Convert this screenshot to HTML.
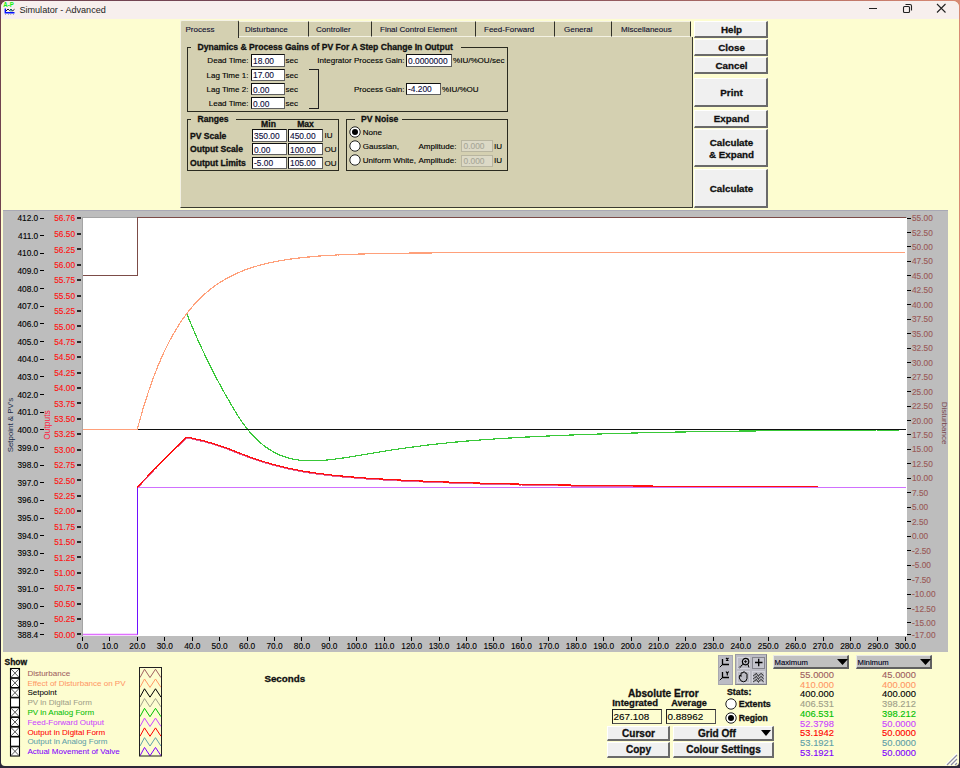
<!DOCTYPE html>
<html><head><meta charset="utf-8"><style>
html,body{margin:0;padding:0;width:960px;height:768px;overflow:hidden;}
body{position:relative;font-family:"Liberation Sans", sans-serif;}
.b{position:absolute;}
.t{position:absolute;white-space:nowrap;line-height:1;font-family:"Liberation Sans", sans-serif;}
.k{-webkit-text-stroke-width:0.3px;}
.n{-webkit-text-stroke-width:0.12px;}
</style></head><body>
<div class="b" style="left:0;top:0;width:960px;height:768px;background:linear-gradient(90deg,#70424f 0%,#7a4a58 50%,#c47a6a 90%,#d88a74 100%)"></div>
<div class="b" style="left:0;top:300px;width:960px;height:468px;background:linear-gradient(180deg,rgba(44,38,56,0) 0%,#2c2638 50%)"></div>
<div class="b" style="left:1px;top:1px;width:958px;height:765px;background:#fdfdd0;border-radius:6px 6px 4px 4px;overflow:hidden"></div>
<div class="b" style="left:1px;top:1px;width:958px;height:18px;background:#f7efed;border-radius:6px 6px 0 0"></div>
<div class="t n" style="left:19.40px;top:5.50px;font-size:9.1px;color:#1c1c1c;font-weight:normal;-webkit-text-stroke-width:0;">Simulator - Advanced</div>
<svg class="b" style="left:3px;top:1px" width="13" height="15" viewBox="0 0 13 15">
<text x="0.3" y="5.8" font-family="Liberation Sans" font-weight="bold" font-size="6.6" fill="#10f010" textLength="10.5" lengthAdjust="spacingAndGlyphs">A-P</text>
<polyline points="2.3,7.5 2.3,11.8 11.5,11.8" fill="none" stroke="#0010ff" stroke-width="1.4"/>
<polyline points="3,10 5,8 6.5,9.5 8,8 9.5,10 11.5,8.3" fill="none" stroke="#202020" stroke-width="1"/>
<path d="M8 8 V10.5" stroke="#108080" stroke-width="1.2"/>
<path d="M2 13.5 H2.6 M5 13.5 H5.6 M7.5 13.5 H8.1 M10 13.5 H10.6" stroke="#707070" stroke-width="0.8"/>
</svg>
<div class="b" style="left:869px;top:8px;width:8px;height:1px;background:#222"></div>
<svg class="b" style="left:900px;top:2px" width="14" height="12" viewBox="0 0 14 12">
<rect x="3.5" y="4.5" width="6" height="6" rx="1" fill="none" stroke="#222" stroke-width="1.1"/>
<path d="M5.5 2.5 H10 a1.5 1.5 0 0 1 1.5 1.5 V8.5" fill="none" stroke="#222" stroke-width="1.1"/>
</svg>
<svg class="b" style="left:935px;top:2.3px" width="12" height="12" viewBox="0 0 12 12">
<path d="M2 2 L10.5 10.5 M10.5 2 L2 10.5" stroke="#222" stroke-width="1.1"/>
</svg>
<div class="b" style="left:180px;top:37px;width:513px;height:171px;background:#d4d0b1;border-left:1px solid #f4f2e4;border-right:1px solid #3a3a30;border-bottom:1px solid #3a3a30;box-sizing:border-box"></div>
<div class="b" style="left:180px;top:20px;width:59px;height:18px;background:#d4d0b1;border-left:1px solid #f4f2e4;border-top:1px solid #f4f2e4;border-right:1.5px solid #303028;border-radius:2px 2px 0 0;box-sizing:border-box"></div>
<div class="t n" style="left:185.50px;top:26.23px;font-size:8.0px;color:#101030;font-weight:normal;">Process</div>
<div class="b" style="left:239px;top:21px;width:70px;height:16px;background:#d4d0b1;border-top:1px solid #f4f2e4;border-right:1.5px solid #303028;border-bottom:1px solid #f4f2e4;box-sizing:border-box"></div>
<div class="t n" style="left:245.00px;top:25.73px;font-size:8.0px;color:#101030;font-weight:normal;">Disturbance</div>
<div class="b" style="left:309px;top:21px;width:63px;height:16px;background:#d4d0b1;border-top:1px solid #f4f2e4;border-right:1.5px solid #303028;border-bottom:1px solid #f4f2e4;box-sizing:border-box"></div>
<div class="t n" style="left:316.00px;top:25.73px;font-size:8.0px;color:#101030;font-weight:normal;">Controller</div>
<div class="b" style="left:372px;top:21px;width:104px;height:16px;background:#d4d0b1;border-top:1px solid #f4f2e4;border-right:1.5px solid #303028;border-bottom:1px solid #f4f2e4;box-sizing:border-box"></div>
<div class="t n" style="left:380.00px;top:25.73px;font-size:8.0px;color:#101030;font-weight:normal;">Final Control Element</div>
<div class="b" style="left:476px;top:21px;width:79px;height:16px;background:#d4d0b1;border-top:1px solid #f4f2e4;border-right:1.5px solid #303028;border-bottom:1px solid #f4f2e4;box-sizing:border-box"></div>
<div class="t n" style="left:484.00px;top:25.73px;font-size:8.0px;color:#101030;font-weight:normal;">Feed-Forward</div>
<div class="b" style="left:555px;top:21px;width:57px;height:16px;background:#d4d0b1;border-top:1px solid #f4f2e4;border-right:1.5px solid #303028;border-bottom:1px solid #f4f2e4;box-sizing:border-box"></div>
<div class="t n" style="left:564.00px;top:25.73px;font-size:8.0px;color:#101030;font-weight:normal;">General</div>
<div class="b" style="left:612px;top:21px;width:79px;height:16px;background:#d4d0b1;border-top:1px solid #f4f2e4;border-right:1.5px solid #303028;border-bottom:1px solid #f4f2e4;box-sizing:border-box"></div>
<div class="t n" style="left:621.00px;top:25.73px;font-size:8.0px;color:#101030;font-weight:normal;">Miscellaneous</div>
<div class="b" style="left:187px;top:47px;width:321px;height:65px;border:1px solid #2a2a20;box-sizing:border-box"></div>
<div class="b" style="left:191.0px;top:44px;width:269.5px;height:6px;background:#d4d0b1"></div>
<div class="t k" style="left:197.50px;top:42.72px;font-size:8.6px;color:#101010;font-weight:bold;">Dynamics &amp; Process Gains of PV For A Step Change In Output</div>
<div class="b" style="left:251px;top:54px;width:33.5px;height:12.5px;background:#fff;border:1px solid #101010;border-right-color:#606060;border-bottom-color:#606060;box-sizing:border-box"></div>
<div class="t n" style="left:253.00px;top:56.89px;font-size:8.4px;color:#101040;font-weight:normal;">18.00</div>
<div class="t n" style="right:711.50px;text-align:right;top:57.19px;font-size:8.05px;color:#000;font-weight:normal;">Dead Time:</div>
<div class="t n" style="left:285.50px;top:57.19px;font-size:8.05px;color:#000;font-weight:normal;">sec</div>
<div class="b" style="left:251px;top:68.5px;width:33.5px;height:12.5px;background:#fff;border:1px solid #101010;border-right-color:#606060;border-bottom-color:#606060;box-sizing:border-box"></div>
<div class="t n" style="left:253.00px;top:71.39px;font-size:8.4px;color:#101040;font-weight:normal;">17.00</div>
<div class="t n" style="right:711.50px;text-align:right;top:71.69px;font-size:8.05px;color:#000;font-weight:normal;">Lag Time 1:</div>
<div class="t n" style="left:285.50px;top:71.69px;font-size:8.05px;color:#000;font-weight:normal;">sec</div>
<div class="b" style="left:251px;top:82.7px;width:33.5px;height:12.5px;background:#fff;border:1px solid #101010;border-right-color:#606060;border-bottom-color:#606060;box-sizing:border-box"></div>
<div class="t n" style="left:253.00px;top:85.59px;font-size:8.4px;color:#101040;font-weight:normal;">0.00</div>
<div class="t n" style="right:711.50px;text-align:right;top:85.89px;font-size:8.05px;color:#000;font-weight:normal;">Lag Time 2:</div>
<div class="t n" style="left:285.50px;top:85.89px;font-size:8.05px;color:#000;font-weight:normal;">sec</div>
<div class="b" style="left:251px;top:96.8px;width:33.5px;height:12.5px;background:#fff;border:1px solid #101010;border-right-color:#606060;border-bottom-color:#606060;box-sizing:border-box"></div>
<div class="t n" style="left:253.00px;top:99.69px;font-size:8.4px;color:#101040;font-weight:normal;">0.00</div>
<div class="t n" style="right:711.50px;text-align:right;top:99.99px;font-size:8.05px;color:#000;font-weight:normal;">Lead Time:</div>
<div class="t n" style="left:285.50px;top:99.99px;font-size:8.05px;color:#000;font-weight:normal;">sec</div>
<div class="b" style="left:309px;top:69px;width:10px;height:40px;border-top:1px solid #202020;border-right:1px solid #202020;border-bottom:1px solid #202020;box-sizing:border-box"></div>
<div class="b" style="left:406px;top:54px;width:45.5px;height:12.5px;background:#fff;border:1px solid #101010;border-right-color:#606060;border-bottom-color:#606060;box-sizing:border-box"></div>
<div class="t n" style="left:408.00px;top:56.89px;font-size:8.4px;color:#101040;font-weight:normal;">0.0000000</div>
<div class="t n" style="right:555.50px;text-align:right;top:57.19px;font-size:8.05px;color:#000;font-weight:normal;">Integrator Process Gain:</div>
<div class="t n" style="left:453.00px;top:57.19px;font-size:8.05px;color:#000;font-weight:normal;">%IU/%OU/sec</div>
<div class="b" style="left:406px;top:82.5px;width:34.5px;height:12.5px;background:#fff;border:1px solid #101010;border-right-color:#606060;border-bottom-color:#606060;box-sizing:border-box"></div>
<div class="t n" style="left:408.00px;top:85.39px;font-size:8.4px;color:#101040;font-weight:normal;">-4.200</div>
<div class="t n" style="right:555.50px;text-align:right;top:85.69px;font-size:8.05px;color:#000;font-weight:normal;">Process Gain:</div>
<div class="t n" style="left:442.00px;top:85.69px;font-size:8.05px;color:#000;font-weight:normal;">%IU/%OU</div>
<div class="b" style="left:187px;top:119px;width:152px;height:52px;border:1px solid #2a2a20;box-sizing:border-box"></div>
<div class="b" style="left:191.0px;top:116px;width:44.5px;height:6px;background:#d4d0b1"></div>
<div class="t k" style="left:197.50px;top:114.72px;font-size:8.6px;color:#101010;font-weight:bold;">Ranges</div>
<div class="t k" style="left:-31.50px;width:600px;text-align:center;top:119.72px;font-size:8.6px;color:#101010;font-weight:bold;">Min</div>
<div class="t k" style="left:5.50px;width:600px;text-align:center;top:119.72px;font-size:8.6px;color:#101010;font-weight:bold;">Max</div>
<div class="b" style="left:252px;top:129px;width:34.5px;height:12.5px;background:#fff;border:1px solid #101010;border-right-color:#606060;border-bottom-color:#606060;box-sizing:border-box"></div>
<div class="t n" style="left:254.00px;top:131.89px;font-size:8.4px;color:#101040;font-weight:normal;">350.00</div>
<div class="b" style="left:288px;top:129px;width:35px;height:12.5px;background:#fff;border:1px solid #101010;border-right-color:#606060;border-bottom-color:#606060;box-sizing:border-box"></div>
<div class="t n" style="left:290.00px;top:131.89px;font-size:8.4px;color:#101040;font-weight:normal;">450.00</div>
<div class="t k" style="left:190.00px;top:131.72px;font-size:8.6px;color:#101010;font-weight:bold;">PV Scale</div>
<div class="t n" style="left:324.50px;top:132.19px;font-size:8.05px;color:#000;font-weight:normal;">IU</div>
<div class="b" style="left:252px;top:142.7px;width:34.5px;height:12.5px;background:#fff;border:1px solid #101010;border-right-color:#606060;border-bottom-color:#606060;box-sizing:border-box"></div>
<div class="t n" style="left:254.00px;top:145.59px;font-size:8.4px;color:#101040;font-weight:normal;">0.00</div>
<div class="b" style="left:288px;top:142.7px;width:35px;height:12.5px;background:#fff;border:1px solid #101010;border-right-color:#606060;border-bottom-color:#606060;box-sizing:border-box"></div>
<div class="t n" style="left:290.00px;top:145.59px;font-size:8.4px;color:#101040;font-weight:normal;">100.00</div>
<div class="t k" style="left:190.00px;top:145.42px;font-size:8.6px;color:#101010;font-weight:bold;">Output Scale</div>
<div class="t n" style="left:324.50px;top:145.89px;font-size:8.05px;color:#000;font-weight:normal;">OU</div>
<div class="b" style="left:252px;top:156.5px;width:34.5px;height:12.5px;background:#fff;border:1px solid #101010;border-right-color:#606060;border-bottom-color:#606060;box-sizing:border-box"></div>
<div class="t n" style="left:254.00px;top:159.39px;font-size:8.4px;color:#101040;font-weight:normal;">-5.00</div>
<div class="b" style="left:288px;top:156.5px;width:35px;height:12.5px;background:#fff;border:1px solid #101010;border-right-color:#606060;border-bottom-color:#606060;box-sizing:border-box"></div>
<div class="t n" style="left:290.00px;top:159.39px;font-size:8.4px;color:#101040;font-weight:normal;">105.00</div>
<div class="t k" style="left:190.00px;top:159.22px;font-size:8.6px;color:#101010;font-weight:bold;">Output Limits</div>
<div class="t n" style="left:324.50px;top:159.69px;font-size:8.05px;color:#000;font-weight:normal;">OU</div>
<div class="b" style="left:346px;top:119px;width:162px;height:52px;border:1px solid #2a2a20;box-sizing:border-box"></div>
<div class="b" style="left:354.5px;top:116px;width:47.5px;height:6px;background:#d4d0b1"></div>
<div class="t k" style="left:361.00px;top:114.72px;font-size:8.6px;color:#101010;font-weight:bold;">PV Noise</div>
<svg class="b" style="left:349px;top:126px" width="12" height="12" viewBox="0 0 12 12"><circle cx="6" cy="6" r="5.2" fill="#fff" stroke="#202020" stroke-width="1"/><circle cx="6" cy="6" r="3" fill="#000"/></svg>
<svg class="b" style="left:349px;top:140px" width="12" height="12" viewBox="0 0 12 12"><circle cx="6" cy="6" r="5.2" fill="#fff" stroke="#202020" stroke-width="1"/></svg>
<svg class="b" style="left:349px;top:153.5px" width="12" height="12" viewBox="0 0 12 12"><circle cx="6" cy="6" r="5.2" fill="#fff" stroke="#202020" stroke-width="1"/></svg>
<div class="t n" style="left:362.80px;top:129.19px;font-size:8.05px;color:#000;font-weight:normal;">None</div>
<div class="t n" style="left:362.80px;top:143.19px;font-size:8.05px;color:#000;font-weight:normal;">Gaussian,</div>
<div class="t n" style="left:362.80px;top:156.69px;font-size:8.05px;color:#000;font-weight:normal;">Uniform White,</div>
<div class="t n" style="right:503.50px;text-align:right;top:143.19px;font-size:8.05px;color:#000;font-weight:normal;">Amplitude:</div>
<div class="t n" style="right:503.50px;text-align:right;top:156.69px;font-size:8.05px;color:#000;font-weight:normal;">Amplitude:</div>
<div class="b" style="left:461px;top:139.5px;width:31.5px;height:12.5px;background:#dcd9c6;border:1px solid #b8b5a0;box-sizing:border-box"></div>
<div class="t n" style="left:463.50px;top:142.39px;font-size:8.4px;color:#a8a898;font-weight:normal;">0.000</div>
<div class="b" style="left:461px;top:154.5px;width:31.5px;height:12.5px;background:#dcd9c6;border:1px solid #b8b5a0;box-sizing:border-box"></div>
<div class="t n" style="left:463.50px;top:157.39px;font-size:8.4px;color:#a8a898;font-weight:normal;">0.000</div>
<div class="t n" style="left:494.00px;top:143.19px;font-size:8.05px;color:#000;font-weight:normal;">IU</div>
<div class="t n" style="left:494.00px;top:156.69px;font-size:8.05px;color:#000;font-weight:normal;">IU</div>
<div class="b" style="left:694px;top:21px;width:74px;height:17px;background:#f0f0f0;border-top:1px solid #fff;border-left:1px solid #fff;border-right:2px solid #6a6a6a;border-bottom:2px solid #6a6a6a;box-sizing:border-box"></div>
<div class="t k" style="left:431.50px;width:600px;text-align:center;top:25.00px;font-size:9.8px;color:#101010;font-weight:bold;">Help</div>
<div class="b" style="left:694px;top:39px;width:74px;height:17px;background:#f0f0f0;border-top:1px solid #fff;border-left:1px solid #fff;border-right:2px solid #6a6a6a;border-bottom:2px solid #6a6a6a;box-sizing:border-box"></div>
<div class="t k" style="left:431.50px;width:600px;text-align:center;top:43.00px;font-size:9.8px;color:#101010;font-weight:bold;">Close</div>
<div class="b" style="left:694px;top:57px;width:74px;height:17px;background:#f0f0f0;border-top:1px solid #fff;border-left:1px solid #fff;border-right:2px solid #6a6a6a;border-bottom:2px solid #6a6a6a;box-sizing:border-box"></div>
<div class="t k" style="left:431.50px;width:600px;text-align:center;top:61.00px;font-size:9.8px;color:#101010;font-weight:bold;">Cancel</div>
<div class="b" style="left:694px;top:78px;width:74px;height:29px;background:#f0f0f0;border-top:1px solid #fff;border-left:1px solid #fff;border-right:2px solid #6a6a6a;border-bottom:2px solid #6a6a6a;box-sizing:border-box"></div>
<div class="t k" style="left:431.50px;width:600px;text-align:center;top:88.00px;font-size:9.8px;color:#101010;font-weight:bold;">Print</div>
<div class="b" style="left:694px;top:110px;width:74px;height:17.5px;background:#f0f0f0;border-top:1px solid #fff;border-left:1px solid #fff;border-right:2px solid #6a6a6a;border-bottom:2px solid #6a6a6a;box-sizing:border-box"></div>
<div class="t k" style="left:431.50px;width:600px;text-align:center;top:114.25px;font-size:9.8px;color:#101010;font-weight:bold;">Expand</div>
<div class="b" style="left:694px;top:129px;width:74px;height:38px;background:#f0f0f0;border-top:1px solid #fff;border-left:1px solid #fff;border-right:2px solid #6a6a6a;border-bottom:2px solid #6a6a6a;box-sizing:border-box"></div>
<div class="t k" style="left:431.50px;width:600px;text-align:center;top:137.90px;font-size:9.8px;color:#101010;font-weight:bold;">Calculate</div>
<div class="t k" style="left:431.50px;width:600px;text-align:center;top:150.10px;font-size:9.8px;color:#101010;font-weight:bold;">&amp; Expand</div>
<div class="b" style="left:694px;top:169px;width:74px;height:39px;background:#f0f0f0;border-top:1px solid #fff;border-left:1px solid #fff;border-right:2px solid #6a6a6a;border-bottom:2px solid #6a6a6a;box-sizing:border-box"></div>
<div class="t k" style="left:431.50px;width:600px;text-align:center;top:184.00px;font-size:9.8px;color:#101010;font-weight:bold;">Calculate</div>
<div class="b" style="left:3px;top:210px;width:945px;height:442px;background:#bdbdbd;border-top:1px solid #a8a8b4;box-sizing:border-box"></div>
<div class="b" style="left:82px;top:217px;width:825px;height:419px;background:#fff;border-left:1px solid #a4a4a4;border-top:1px solid #a4a4a4;box-sizing:border-box"></div>
<div class="b" style="left:40px;top:218px;width:4px;height:1px;background:#000"></div>
<div class="t n" style="right:921.80px;text-align:right;top:214.07px;font-size:8.3px;color:#000;font-weight:normal;">412.0</div>
<div class="b" style="left:40px;top:235px;width:4px;height:1px;background:#000"></div>
<div class="t n" style="right:921.80px;text-align:right;top:231.72px;font-size:8.3px;color:#000;font-weight:normal;">411.0</div>
<div class="b" style="left:40px;top:253px;width:4px;height:1px;background:#000"></div>
<div class="t n" style="right:921.80px;text-align:right;top:249.37px;font-size:8.3px;color:#000;font-weight:normal;">410.0</div>
<div class="b" style="left:40px;top:270px;width:4px;height:1px;background:#000"></div>
<div class="t n" style="right:921.80px;text-align:right;top:267.02px;font-size:8.3px;color:#000;font-weight:normal;">409.0</div>
<div class="b" style="left:40px;top:288px;width:4px;height:1px;background:#000"></div>
<div class="t n" style="right:921.80px;text-align:right;top:284.67px;font-size:8.3px;color:#000;font-weight:normal;">408.0</div>
<div class="b" style="left:40px;top:306px;width:4px;height:1px;background:#000"></div>
<div class="t n" style="right:921.80px;text-align:right;top:302.31px;font-size:8.3px;color:#000;font-weight:normal;">407.0</div>
<div class="b" style="left:40px;top:323px;width:4px;height:1px;background:#000"></div>
<div class="t n" style="right:921.80px;text-align:right;top:319.96px;font-size:8.3px;color:#000;font-weight:normal;">406.0</div>
<div class="b" style="left:40px;top:341px;width:4px;height:1px;background:#000"></div>
<div class="t n" style="right:921.80px;text-align:right;top:337.61px;font-size:8.3px;color:#000;font-weight:normal;">405.0</div>
<div class="b" style="left:40px;top:359px;width:4px;height:1px;background:#000"></div>
<div class="t n" style="right:921.80px;text-align:right;top:355.26px;font-size:8.3px;color:#000;font-weight:normal;">404.0</div>
<div class="b" style="left:40px;top:376px;width:4px;height:1px;background:#000"></div>
<div class="t n" style="right:921.80px;text-align:right;top:372.91px;font-size:8.3px;color:#000;font-weight:normal;">403.0</div>
<div class="b" style="left:40px;top:394px;width:4px;height:1px;background:#000"></div>
<div class="t n" style="right:921.80px;text-align:right;top:390.55px;font-size:8.3px;color:#000;font-weight:normal;">402.0</div>
<div class="b" style="left:40px;top:412px;width:4px;height:1px;background:#000"></div>
<div class="t n" style="right:921.80px;text-align:right;top:408.20px;font-size:8.3px;color:#000;font-weight:normal;">401.0</div>
<div class="b" style="left:40px;top:429px;width:4px;height:1px;background:#000"></div>
<div class="t n" style="right:921.80px;text-align:right;top:425.85px;font-size:8.3px;color:#000;font-weight:normal;">400.0</div>
<div class="b" style="left:40px;top:447px;width:4px;height:1px;background:#000"></div>
<div class="t n" style="right:921.80px;text-align:right;top:443.50px;font-size:8.3px;color:#000;font-weight:normal;">399.0</div>
<div class="b" style="left:40px;top:465px;width:4px;height:1px;background:#000"></div>
<div class="t n" style="right:921.80px;text-align:right;top:461.15px;font-size:8.3px;color:#000;font-weight:normal;">398.0</div>
<div class="b" style="left:40px;top:482px;width:4px;height:1px;background:#000"></div>
<div class="t n" style="right:921.80px;text-align:right;top:478.79px;font-size:8.3px;color:#000;font-weight:normal;">397.0</div>
<div class="b" style="left:40px;top:500px;width:4px;height:1px;background:#000"></div>
<div class="t n" style="right:921.80px;text-align:right;top:496.44px;font-size:8.3px;color:#000;font-weight:normal;">396.0</div>
<div class="b" style="left:40px;top:518px;width:4px;height:1px;background:#000"></div>
<div class="t n" style="right:921.80px;text-align:right;top:514.09px;font-size:8.3px;color:#000;font-weight:normal;">395.0</div>
<div class="b" style="left:40px;top:535px;width:4px;height:1px;background:#000"></div>
<div class="t n" style="right:921.80px;text-align:right;top:531.74px;font-size:8.3px;color:#000;font-weight:normal;">394.0</div>
<div class="b" style="left:40px;top:553px;width:4px;height:1px;background:#000"></div>
<div class="t n" style="right:921.80px;text-align:right;top:549.39px;font-size:8.3px;color:#000;font-weight:normal;">393.0</div>
<div class="b" style="left:40px;top:570px;width:4px;height:1px;background:#000"></div>
<div class="t n" style="right:921.80px;text-align:right;top:567.03px;font-size:8.3px;color:#000;font-weight:normal;">392.0</div>
<div class="b" style="left:40px;top:588px;width:4px;height:1px;background:#000"></div>
<div class="t n" style="right:921.80px;text-align:right;top:584.68px;font-size:8.3px;color:#000;font-weight:normal;">391.0</div>
<div class="b" style="left:40px;top:606px;width:4px;height:1px;background:#000"></div>
<div class="t n" style="right:921.80px;text-align:right;top:602.33px;font-size:8.3px;color:#000;font-weight:normal;">390.0</div>
<div class="b" style="left:40px;top:623px;width:4px;height:1px;background:#000"></div>
<div class="t n" style="right:921.80px;text-align:right;top:619.98px;font-size:8.3px;color:#000;font-weight:normal;">389.0</div>
<div class="b" style="left:40px;top:634px;width:4px;height:1px;background:#000"></div>
<div class="t n" style="right:921.80px;text-align:right;top:630.57px;font-size:8.3px;color:#000;font-weight:normal;">388.4</div>
<div class="b" style="left:77px;top:217px;width:4px;height:2px;background:#2a2a2a"></div>
<div class="t n" style="right:885.00px;text-align:right;top:214.07px;font-size:8.3px;color:#ff1010;font-weight:normal;">56.76</div>
<div class="b" style="left:77px;top:233px;width:4px;height:2px;background:#2a2a2a"></div>
<div class="t n" style="right:885.00px;text-align:right;top:230.09px;font-size:8.3px;color:#ff1010;font-weight:normal;">56.50</div>
<div class="b" style="left:77px;top:248px;width:4px;height:2px;background:#2a2a2a"></div>
<div class="t n" style="right:885.00px;text-align:right;top:245.50px;font-size:8.3px;color:#ff1010;font-weight:normal;">56.25</div>
<div class="b" style="left:77px;top:264px;width:4px;height:2px;background:#2a2a2a"></div>
<div class="t n" style="right:885.00px;text-align:right;top:260.90px;font-size:8.3px;color:#ff1010;font-weight:normal;">56.00</div>
<div class="b" style="left:77px;top:279px;width:4px;height:2px;background:#2a2a2a"></div>
<div class="t n" style="right:885.00px;text-align:right;top:276.30px;font-size:8.3px;color:#ff1010;font-weight:normal;">55.75</div>
<div class="b" style="left:77px;top:295px;width:4px;height:2px;background:#2a2a2a"></div>
<div class="t n" style="right:885.00px;text-align:right;top:291.70px;font-size:8.3px;color:#ff1010;font-weight:normal;">55.50</div>
<div class="b" style="left:77px;top:310px;width:4px;height:2px;background:#2a2a2a"></div>
<div class="t n" style="right:885.00px;text-align:right;top:307.11px;font-size:8.3px;color:#ff1010;font-weight:normal;">55.25</div>
<div class="b" style="left:77px;top:325px;width:4px;height:2px;background:#2a2a2a"></div>
<div class="t n" style="right:885.00px;text-align:right;top:322.51px;font-size:8.3px;color:#ff1010;font-weight:normal;">55.00</div>
<div class="b" style="left:77px;top:341px;width:4px;height:2px;background:#2a2a2a"></div>
<div class="t n" style="right:885.00px;text-align:right;top:337.91px;font-size:8.3px;color:#ff1010;font-weight:normal;">54.75</div>
<div class="b" style="left:77px;top:356px;width:4px;height:2px;background:#2a2a2a"></div>
<div class="t n" style="right:885.00px;text-align:right;top:353.31px;font-size:8.3px;color:#ff1010;font-weight:normal;">54.50</div>
<div class="b" style="left:77px;top:372px;width:4px;height:2px;background:#2a2a2a"></div>
<div class="t n" style="right:885.00px;text-align:right;top:368.72px;font-size:8.3px;color:#ff1010;font-weight:normal;">54.25</div>
<div class="b" style="left:77px;top:387px;width:4px;height:2px;background:#2a2a2a"></div>
<div class="t n" style="right:885.00px;text-align:right;top:384.12px;font-size:8.3px;color:#ff1010;font-weight:normal;">54.00</div>
<div class="b" style="left:77px;top:402px;width:4px;height:2px;background:#2a2a2a"></div>
<div class="t n" style="right:885.00px;text-align:right;top:399.52px;font-size:8.3px;color:#ff1010;font-weight:normal;">53.75</div>
<div class="b" style="left:77px;top:418px;width:4px;height:2px;background:#2a2a2a"></div>
<div class="t n" style="right:885.00px;text-align:right;top:414.92px;font-size:8.3px;color:#ff1010;font-weight:normal;">53.50</div>
<div class="b" style="left:77px;top:433px;width:4px;height:2px;background:#2a2a2a"></div>
<div class="t n" style="right:885.00px;text-align:right;top:430.33px;font-size:8.3px;color:#ff1010;font-weight:normal;">53.25</div>
<div class="b" style="left:77px;top:449px;width:4px;height:2px;background:#2a2a2a"></div>
<div class="t n" style="right:885.00px;text-align:right;top:445.73px;font-size:8.3px;color:#ff1010;font-weight:normal;">53.00</div>
<div class="b" style="left:77px;top:464px;width:4px;height:2px;background:#2a2a2a"></div>
<div class="t n" style="right:885.00px;text-align:right;top:461.13px;font-size:8.3px;color:#ff1010;font-weight:normal;">52.75</div>
<div class="b" style="left:77px;top:479px;width:4px;height:2px;background:#2a2a2a"></div>
<div class="t n" style="right:885.00px;text-align:right;top:476.53px;font-size:8.3px;color:#ff1010;font-weight:normal;">52.50</div>
<div class="b" style="left:77px;top:495px;width:4px;height:2px;background:#2a2a2a"></div>
<div class="t n" style="right:885.00px;text-align:right;top:491.94px;font-size:8.3px;color:#ff1010;font-weight:normal;">52.25</div>
<div class="b" style="left:77px;top:510px;width:4px;height:2px;background:#2a2a2a"></div>
<div class="t n" style="right:885.00px;text-align:right;top:507.34px;font-size:8.3px;color:#ff1010;font-weight:normal;">52.00</div>
<div class="b" style="left:77px;top:526px;width:4px;height:2px;background:#2a2a2a"></div>
<div class="t n" style="right:885.00px;text-align:right;top:522.74px;font-size:8.3px;color:#ff1010;font-weight:normal;">51.75</div>
<div class="b" style="left:77px;top:541px;width:4px;height:2px;background:#2a2a2a"></div>
<div class="t n" style="right:885.00px;text-align:right;top:538.14px;font-size:8.3px;color:#ff1010;font-weight:normal;">51.50</div>
<div class="b" style="left:77px;top:556px;width:4px;height:2px;background:#2a2a2a"></div>
<div class="t n" style="right:885.00px;text-align:right;top:553.55px;font-size:8.3px;color:#ff1010;font-weight:normal;">51.25</div>
<div class="b" style="left:77px;top:572px;width:4px;height:2px;background:#2a2a2a"></div>
<div class="t n" style="right:885.00px;text-align:right;top:568.95px;font-size:8.3px;color:#ff1010;font-weight:normal;">51.00</div>
<div class="b" style="left:77px;top:587px;width:4px;height:2px;background:#2a2a2a"></div>
<div class="t n" style="right:885.00px;text-align:right;top:584.35px;font-size:8.3px;color:#ff1010;font-weight:normal;">50.75</div>
<div class="b" style="left:77px;top:603px;width:4px;height:2px;background:#2a2a2a"></div>
<div class="t n" style="right:885.00px;text-align:right;top:599.75px;font-size:8.3px;color:#ff1010;font-weight:normal;">50.50</div>
<div class="b" style="left:77px;top:618px;width:4px;height:2px;background:#2a2a2a"></div>
<div class="t n" style="right:885.00px;text-align:right;top:615.16px;font-size:8.3px;color:#ff1010;font-weight:normal;">50.25</div>
<div class="b" style="left:77px;top:633px;width:4px;height:2px;background:#2a2a2a"></div>
<div class="t n" style="right:885.00px;text-align:right;top:630.56px;font-size:8.3px;color:#ff1010;font-weight:normal;">50.00</div>
<div class="b" style="left:907px;top:218px;width:4px;height:1px;background:#000"></div>
<div class="t n" style="left:912.00px;top:214.07px;font-size:8.3px;color:#9a5a58;font-weight:normal;">55.00</div>
<div class="b" style="left:907px;top:232px;width:4px;height:1px;background:#000"></div>
<div class="t n" style="left:912.00px;top:228.54px;font-size:8.3px;color:#9a5a58;font-weight:normal;">52.50</div>
<div class="b" style="left:907px;top:246px;width:4px;height:1px;background:#000"></div>
<div class="t n" style="left:912.00px;top:243.00px;font-size:8.3px;color:#9a5a58;font-weight:normal;">50.00</div>
<div class="b" style="left:907px;top:261px;width:4px;height:1px;background:#000"></div>
<div class="t n" style="left:912.00px;top:257.46px;font-size:8.3px;color:#9a5a58;font-weight:normal;">47.50</div>
<div class="b" style="left:907px;top:275px;width:4px;height:1px;background:#000"></div>
<div class="t n" style="left:912.00px;top:271.92px;font-size:8.3px;color:#9a5a58;font-weight:normal;">45.00</div>
<div class="b" style="left:907px;top:290px;width:4px;height:1px;background:#000"></div>
<div class="t n" style="left:912.00px;top:286.39px;font-size:8.3px;color:#9a5a58;font-weight:normal;">42.50</div>
<div class="b" style="left:907px;top:304px;width:4px;height:1px;background:#000"></div>
<div class="t n" style="left:912.00px;top:300.85px;font-size:8.3px;color:#9a5a58;font-weight:normal;">40.00</div>
<div class="b" style="left:907px;top:319px;width:4px;height:1px;background:#000"></div>
<div class="t n" style="left:912.00px;top:315.31px;font-size:8.3px;color:#9a5a58;font-weight:normal;">37.50</div>
<div class="b" style="left:907px;top:333px;width:4px;height:1px;background:#000"></div>
<div class="t n" style="left:912.00px;top:329.77px;font-size:8.3px;color:#9a5a58;font-weight:normal;">35.00</div>
<div class="b" style="left:907px;top:348px;width:4px;height:1px;background:#000"></div>
<div class="t n" style="left:912.00px;top:344.24px;font-size:8.3px;color:#9a5a58;font-weight:normal;">32.50</div>
<div class="b" style="left:907px;top:362px;width:4px;height:1px;background:#000"></div>
<div class="t n" style="left:912.00px;top:358.70px;font-size:8.3px;color:#9a5a58;font-weight:normal;">30.00</div>
<div class="b" style="left:907px;top:377px;width:4px;height:1px;background:#000"></div>
<div class="t n" style="left:912.00px;top:373.16px;font-size:8.3px;color:#9a5a58;font-weight:normal;">27.50</div>
<div class="b" style="left:907px;top:391px;width:4px;height:1px;background:#000"></div>
<div class="t n" style="left:912.00px;top:387.62px;font-size:8.3px;color:#9a5a58;font-weight:normal;">25.00</div>
<div class="b" style="left:907px;top:406px;width:4px;height:1px;background:#000"></div>
<div class="t n" style="left:912.00px;top:402.09px;font-size:8.3px;color:#9a5a58;font-weight:normal;">22.50</div>
<div class="b" style="left:907px;top:420px;width:4px;height:1px;background:#000"></div>
<div class="t n" style="left:912.00px;top:416.55px;font-size:8.3px;color:#9a5a58;font-weight:normal;">20.00</div>
<div class="b" style="left:907px;top:434px;width:4px;height:1px;background:#000"></div>
<div class="t n" style="left:912.00px;top:431.01px;font-size:8.3px;color:#9a5a58;font-weight:normal;">17.50</div>
<div class="b" style="left:907px;top:449px;width:4px;height:1px;background:#000"></div>
<div class="t n" style="left:912.00px;top:445.47px;font-size:8.3px;color:#9a5a58;font-weight:normal;">15.00</div>
<div class="b" style="left:907px;top:463px;width:4px;height:1px;background:#000"></div>
<div class="t n" style="left:912.00px;top:459.94px;font-size:8.3px;color:#9a5a58;font-weight:normal;">12.50</div>
<div class="b" style="left:907px;top:478px;width:4px;height:1px;background:#000"></div>
<div class="t n" style="left:912.00px;top:474.40px;font-size:8.3px;color:#9a5a58;font-weight:normal;">10.00</div>
<div class="b" style="left:907px;top:492px;width:4px;height:1px;background:#000"></div>
<div class="t n" style="left:912.00px;top:488.86px;font-size:8.3px;color:#9a5a58;font-weight:normal;">7.50</div>
<div class="b" style="left:907px;top:507px;width:4px;height:1px;background:#000"></div>
<div class="t n" style="left:912.00px;top:503.32px;font-size:8.3px;color:#9a5a58;font-weight:normal;">5.00</div>
<div class="b" style="left:907px;top:521px;width:4px;height:1px;background:#000"></div>
<div class="t n" style="left:912.00px;top:517.79px;font-size:8.3px;color:#9a5a58;font-weight:normal;">2.50</div>
<div class="b" style="left:907px;top:536px;width:4px;height:1px;background:#000"></div>
<div class="t n" style="left:912.00px;top:532.25px;font-size:8.3px;color:#9a5a58;font-weight:normal;">0.00</div>
<div class="b" style="left:907px;top:550px;width:4px;height:1px;background:#000"></div>
<div class="t n" style="left:912.00px;top:546.71px;font-size:8.3px;color:#9a5a58;font-weight:normal;">-2.50</div>
<div class="b" style="left:907px;top:565px;width:4px;height:1px;background:#000"></div>
<div class="t n" style="left:912.00px;top:561.17px;font-size:8.3px;color:#9a5a58;font-weight:normal;">-5.00</div>
<div class="b" style="left:907px;top:579px;width:4px;height:1px;background:#000"></div>
<div class="t n" style="left:912.00px;top:575.64px;font-size:8.3px;color:#9a5a58;font-weight:normal;">-7.50</div>
<div class="b" style="left:907px;top:594px;width:4px;height:1px;background:#000"></div>
<div class="t n" style="left:912.00px;top:590.10px;font-size:8.3px;color:#9a5a58;font-weight:normal;">-10.00</div>
<div class="b" style="left:907px;top:608px;width:4px;height:1px;background:#000"></div>
<div class="t n" style="left:912.00px;top:604.56px;font-size:8.3px;color:#9a5a58;font-weight:normal;">-12.50</div>
<div class="b" style="left:907px;top:622px;width:4px;height:1px;background:#000"></div>
<div class="t n" style="left:912.00px;top:619.02px;font-size:8.3px;color:#9a5a58;font-weight:normal;">-15.00</div>
<div class="b" style="left:907px;top:634px;width:4px;height:1px;background:#000"></div>
<div class="t n" style="left:912.00px;top:630.59px;font-size:8.3px;color:#9a5a58;font-weight:normal;">-17.00</div>
<div class="b" style="left:82px;top:637px;width:1px;height:4px;background:#000"></div>
<div class="t n" style="left:-217.50px;width:600px;text-align:center;top:641.72px;font-size:8.3px;color:#000;font-weight:normal;">0.0</div>
<div class="b" style="left:109px;top:637px;width:1px;height:4px;background:#000"></div>
<div class="t n" style="left:-190.07px;width:600px;text-align:center;top:641.72px;font-size:8.3px;color:#000;font-weight:normal;">10.0</div>
<div class="b" style="left:137px;top:637px;width:1px;height:4px;background:#000"></div>
<div class="t n" style="left:-162.64px;width:600px;text-align:center;top:641.72px;font-size:8.3px;color:#000;font-weight:normal;">20.0</div>
<div class="b" style="left:164px;top:637px;width:1px;height:4px;background:#000"></div>
<div class="t n" style="left:-135.21px;width:600px;text-align:center;top:641.72px;font-size:8.3px;color:#000;font-weight:normal;">30.0</div>
<div class="b" style="left:192px;top:637px;width:1px;height:4px;background:#000"></div>
<div class="t n" style="left:-107.78px;width:600px;text-align:center;top:641.72px;font-size:8.3px;color:#000;font-weight:normal;">40.0</div>
<div class="b" style="left:219px;top:637px;width:1px;height:4px;background:#000"></div>
<div class="t n" style="left:-80.35px;width:600px;text-align:center;top:641.72px;font-size:8.3px;color:#000;font-weight:normal;">50.0</div>
<div class="b" style="left:247px;top:637px;width:1px;height:4px;background:#000"></div>
<div class="t n" style="left:-52.92px;width:600px;text-align:center;top:641.72px;font-size:8.3px;color:#000;font-weight:normal;">60.0</div>
<div class="b" style="left:274px;top:637px;width:1px;height:4px;background:#000"></div>
<div class="t n" style="left:-25.49px;width:600px;text-align:center;top:641.72px;font-size:8.3px;color:#000;font-weight:normal;">70.0</div>
<div class="b" style="left:301px;top:637px;width:1px;height:4px;background:#000"></div>
<div class="t n" style="left:1.94px;width:600px;text-align:center;top:641.72px;font-size:8.3px;color:#000;font-weight:normal;">80.0</div>
<div class="b" style="left:329px;top:637px;width:1px;height:4px;background:#000"></div>
<div class="t n" style="left:29.37px;width:600px;text-align:center;top:641.72px;font-size:8.3px;color:#000;font-weight:normal;">90.0</div>
<div class="b" style="left:356px;top:637px;width:1px;height:4px;background:#000"></div>
<div class="t n" style="left:56.80px;width:600px;text-align:center;top:641.72px;font-size:8.3px;color:#000;font-weight:normal;">100.0</div>
<div class="b" style="left:384px;top:637px;width:1px;height:4px;background:#000"></div>
<div class="t n" style="left:84.23px;width:600px;text-align:center;top:641.72px;font-size:8.3px;color:#000;font-weight:normal;">110.0</div>
<div class="b" style="left:411px;top:637px;width:1px;height:4px;background:#000"></div>
<div class="t n" style="left:111.66px;width:600px;text-align:center;top:641.72px;font-size:8.3px;color:#000;font-weight:normal;">120.0</div>
<div class="b" style="left:439px;top:637px;width:1px;height:4px;background:#000"></div>
<div class="t n" style="left:139.09px;width:600px;text-align:center;top:641.72px;font-size:8.3px;color:#000;font-weight:normal;">130.0</div>
<div class="b" style="left:466px;top:637px;width:1px;height:4px;background:#000"></div>
<div class="t n" style="left:166.52px;width:600px;text-align:center;top:641.72px;font-size:8.3px;color:#000;font-weight:normal;">140.0</div>
<div class="b" style="left:493px;top:637px;width:1px;height:4px;background:#000"></div>
<div class="t n" style="left:193.95px;width:600px;text-align:center;top:641.72px;font-size:8.3px;color:#000;font-weight:normal;">150.0</div>
<div class="b" style="left:521px;top:637px;width:1px;height:4px;background:#000"></div>
<div class="t n" style="left:221.38px;width:600px;text-align:center;top:641.72px;font-size:8.3px;color:#000;font-weight:normal;">160.0</div>
<div class="b" style="left:548px;top:637px;width:1px;height:4px;background:#000"></div>
<div class="t n" style="left:248.81px;width:600px;text-align:center;top:641.72px;font-size:8.3px;color:#000;font-weight:normal;">170.0</div>
<div class="b" style="left:576px;top:637px;width:1px;height:4px;background:#000"></div>
<div class="t n" style="left:276.24px;width:600px;text-align:center;top:641.72px;font-size:8.3px;color:#000;font-weight:normal;">180.0</div>
<div class="b" style="left:603px;top:637px;width:1px;height:4px;background:#000"></div>
<div class="t n" style="left:303.67px;width:600px;text-align:center;top:641.72px;font-size:8.3px;color:#000;font-weight:normal;">190.0</div>
<div class="b" style="left:631px;top:637px;width:1px;height:4px;background:#000"></div>
<div class="t n" style="left:331.10px;width:600px;text-align:center;top:641.72px;font-size:8.3px;color:#000;font-weight:normal;">200.0</div>
<div class="b" style="left:658px;top:637px;width:1px;height:4px;background:#000"></div>
<div class="t n" style="left:358.53px;width:600px;text-align:center;top:641.72px;font-size:8.3px;color:#000;font-weight:normal;">210.0</div>
<div class="b" style="left:685px;top:637px;width:1px;height:4px;background:#000"></div>
<div class="t n" style="left:385.96px;width:600px;text-align:center;top:641.72px;font-size:8.3px;color:#000;font-weight:normal;">220.0</div>
<div class="b" style="left:713px;top:637px;width:1px;height:4px;background:#000"></div>
<div class="t n" style="left:413.39px;width:600px;text-align:center;top:641.72px;font-size:8.3px;color:#000;font-weight:normal;">230.0</div>
<div class="b" style="left:740px;top:637px;width:1px;height:4px;background:#000"></div>
<div class="t n" style="left:440.82px;width:600px;text-align:center;top:641.72px;font-size:8.3px;color:#000;font-weight:normal;">240.0</div>
<div class="b" style="left:768px;top:637px;width:1px;height:4px;background:#000"></div>
<div class="t n" style="left:468.25px;width:600px;text-align:center;top:641.72px;font-size:8.3px;color:#000;font-weight:normal;">250.0</div>
<div class="b" style="left:795px;top:637px;width:1px;height:4px;background:#000"></div>
<div class="t n" style="left:495.68px;width:600px;text-align:center;top:641.72px;font-size:8.3px;color:#000;font-weight:normal;">260.0</div>
<div class="b" style="left:823px;top:637px;width:1px;height:4px;background:#000"></div>
<div class="t n" style="left:523.11px;width:600px;text-align:center;top:641.72px;font-size:8.3px;color:#000;font-weight:normal;">270.0</div>
<div class="b" style="left:850px;top:637px;width:1px;height:4px;background:#000"></div>
<div class="t n" style="left:550.54px;width:600px;text-align:center;top:641.72px;font-size:8.3px;color:#000;font-weight:normal;">280.0</div>
<div class="b" style="left:877px;top:637px;width:1px;height:4px;background:#000"></div>
<div class="t n" style="left:577.97px;width:600px;text-align:center;top:641.72px;font-size:8.3px;color:#000;font-weight:normal;">290.0</div>
<div class="b" style="left:905px;top:637px;width:1px;height:4px;background:#000"></div>
<div class="t n" style="left:605.40px;width:600px;text-align:center;top:641.72px;font-size:8.3px;color:#000;font-weight:normal;">300.0</div>
<div class="t" style="left:10.5px;top:424.8px;font-size:7.9px;color:#1a2a48;transform:translate(-50%,-50%) rotate(-90deg);">Setpoint &amp; PV's</div>
<div class="t" style="left:47.2px;top:424.8px;font-size:8.4px;color:#ff2040;transform:translate(-50%,-50%) rotate(-90deg);">Outputs</div>
<div class="t" style="left:944px;top:422.7px;font-size:8.0px;color:#7a4a50;transform:translate(-50%,-50%) rotate(90deg);">Disturbance</div>
<svg class="b" style="left:0;top:0" width="960" height="768" viewBox="0 0 960 768"><defs><clipPath id="pc"><rect x="83" y="217" width="824" height="419"/></clipPath></defs><g clip-path="url(#pc)" fill="none" stroke-width="1" stroke-linejoin="round" shape-rendering="crispEdges"><polyline stroke="#7010ff" stroke-width="1.2" points="137.5,634.5 137.5,487.5"/><polyline stroke="#e0609a" stroke-width="1" points="137.4,488.4 138.7,486.8 140.1,485.3 141.5,483.8 142.8,482.3 144.2,480.8 145.6,479.3 147.0,477.8 148.3,476.3 149.7,474.9 151.1,473.4 152.4,472.0 153.8,470.5 155.2,469.1 156.6,467.7 157.9,466.3 159.3,464.9 160.7,463.5 162.0,462.1 163.4,460.7 164.8,459.3 166.2,458.0 167.5,456.6 168.9,455.2 170.3,453.9 171.6,452.5 173.0,451.2 174.4,449.9 175.8,448.5 177.1,447.2 178.5,445.9 179.9,444.6 181.2,443.3 182.6,441.9 184.0,440.6 185.4,439.3 186.7,438.0 188.1,438.3 189.5,438.6 190.8,438.8 192.2,439.1 193.6,439.4 195.0,439.7 196.3,440.0 197.7,440.3 199.1,440.6 200.4,441.0 201.8,441.3 203.2,441.7 204.6,442.0 205.9,442.4 207.3,442.8 208.7,443.1 210.0,443.5 211.4,443.9 212.8,444.3 214.2,444.8 215.5,445.2 216.9,445.6 218.3,446.1 219.7,446.5 221.0,447.0 222.4,447.5 223.8,447.9 225.1,448.4 226.5,448.9 227.9,449.4 229.3,449.9 230.6,450.5 232.0,451.0 233.4,451.5 234.7,452.1 236.1,452.6 237.5,453.2 238.9,453.8 240.2,454.3 241.6,454.8 243.0,455.4 244.3,455.9 245.7,456.4 247.1,456.9 248.5,457.4 249.8,457.9 251.2,458.4 252.6,458.9 253.9,459.4 255.3,459.8 256.7,460.3 258.1,460.7 259.4,461.2 260.8,461.6 262.2,462.1 263.5,462.5 264.9,462.9 266.3,463.3 267.7,463.7 269.0,464.1 270.4,464.5 271.8,464.9 273.1,465.3 274.5,465.7 275.9,466.0 277.3,466.4 278.6,466.7 280.0,467.1 281.4,467.4 282.7,467.8 284.1,468.1 285.5,468.4 286.9,468.7 288.2,469.0 289.6,469.3 291.0,469.6 292.3,469.9 293.7,470.2 295.1,470.4 296.5,470.7 297.8,471.0 299.2,471.2 300.6,471.5 301.9,471.7 303.3,472.0 304.7,472.2 306.1,472.4 307.4,472.6 308.8,472.9 310.2,473.1 311.5,473.3 312.9,473.5 314.3,473.7 315.7,473.9 317.0,474.1 318.4,474.3 319.8,474.5 321.1,474.6 322.5,474.8 323.9,475.0 325.3,475.2 326.6,475.3 328.0,475.5 329.4,475.6 330.7,475.8 332.1,476.0 333.5,476.1 334.9,476.3 336.2,476.4 337.6,476.5 339.0,476.7 340.3,476.8 341.7,476.9 343.1,477.1 344.5,477.2 345.8,477.3 347.2,477.4 348.6,477.6 349.9,477.7 351.3,477.8 352.7,477.9 354.1,478.0 355.4,478.1 356.8,478.2 358.2,478.3 359.5,478.5 360.9,478.6 362.3,478.7 363.7,478.8 365.0,478.9 366.4,479.0 367.8,479.0 369.1,479.1 370.5,479.2 371.9,479.3 373.3,479.4 374.6,479.5 376.0,479.6 377.4,479.7 378.7,479.8 380.1,479.8 381.5,479.9 382.9,480.0 384.2,480.1 385.6,480.2 387.0,480.2 388.3,480.3 389.7,480.4 391.1,480.5 392.5,480.5 393.8,480.6 395.2,480.7 396.6,480.8 397.9,480.8 399.3,480.9 400.7,481.0 402.1,481.0 403.4,481.1 404.8,481.2 406.2,481.2 407.5,481.3 408.9,481.4 410.3,481.4 411.7,481.5 413.0,481.5 414.4,481.6 415.8,481.7 417.1,481.7 418.5,481.8 419.9,481.8 421.3,481.9 422.6,482.0 424.0,482.0 425.4,482.1 426.7,482.1 428.1,482.2 429.5,482.2 430.9,482.3 432.2,482.4 433.6,482.4 435.0,482.5 436.3,482.5 437.7,482.6 439.1,482.6 440.5,482.7 441.8,482.7 443.2,482.8 444.6,482.8 445.9,482.9 447.3,482.9 448.7,483.0 450.1,483.0 451.4,483.1 452.8,483.1 454.2,483.2 455.5,483.2 456.9,483.3 458.3,483.3 459.7,483.3 461.0,483.4 462.4,483.4 463.8,483.5 465.1,483.5 466.5,483.6 467.9,483.6 469.3,483.7 470.6,483.7 472.0,483.7 473.4,483.8 474.7,483.8 476.1,483.9 477.5,483.9 478.9,483.9 480.2,484.0 481.6,484.0 483.0,484.1 484.3,484.1 485.7,484.1 487.1,484.2 488.5,484.2 489.8,484.2 491.2,484.3 492.6,484.3 493.9,484.4 495.3,484.4 496.7,484.4 498.1,484.5 499.4,484.5 500.8,484.5 502.2,484.6 503.6,484.6 504.9,484.6 506.3,484.7 507.7,484.7 509.0,484.7 510.4,484.8 511.8,484.8 513.2,484.8 514.5,484.9 515.9,484.9 517.3,484.9 518.6,485.0 520.0,485.0 521.4,485.0 522.8,485.1 524.1,485.1 525.5,485.1 526.9,485.1 528.2,485.2 529.6,485.2 531.0,485.2 532.4,485.3 533.7,485.3 535.1,485.3 536.5,485.3 537.8,485.4 539.2,485.4 540.6,485.4 542.0,485.5 543.3,485.5 544.7,485.5 546.1,485.5 547.4,485.6 548.8,485.6 550.2,485.6 551.6,485.6 552.9,485.7 554.3,485.7 555.7,485.7 557.0,485.7 558.4,485.8 559.8,485.8 561.2,485.8 562.5,485.8 563.9,485.8 565.3,485.9 566.6,485.9 568.0,485.9 569.4,485.9 570.8,486.0 572.1,486.0 573.5,486.0 574.9,486.0 576.2,486.0 577.6,486.1 579.0,486.1 580.4,486.1 581.7,486.1 583.1,486.1 584.5,486.2 585.8,486.2 587.2,486.2 588.6,486.2 590.0,486.2 591.3,486.3 592.7,486.3 594.1,486.3 595.4,486.3 596.8,486.3 598.2,486.4 599.6,486.4 600.9,486.4 602.3,486.4 603.7,486.4 605.0,486.4 606.4,486.5 607.8,486.5 609.2,486.5 610.5,486.5 611.9,486.5 613.3,486.5 614.6,486.6 616.0,486.6 617.4,486.6 618.8,486.6 620.1,486.6 621.5,486.6 622.9,486.7 624.2,486.7 625.6,486.7 627.0,486.7 628.4,486.7 629.7,486.7 631.1,486.7 632.5,486.8 633.8,486.8 635.2,486.8 636.6,486.8 638.0,486.8 639.3,486.8 640.7,486.8 642.1,486.9 643.4,486.9 644.8,486.9 646.2,486.9 647.6,486.9 648.9,486.9 650.3,486.9 651.7,486.9 653.0,487.0 654.4,487.0 655.8,487.0 657.2,487.0 658.5,487.0 659.9,487.0 661.3,487.0 662.6,487.0 664.0,487.1 665.4,487.1 666.8,487.1 668.1,487.1 669.5,487.1 670.9,487.1 672.2,487.1 673.6,487.1 675.0,487.1 676.4,487.2 677.7,487.2 679.1,487.2 680.5,487.2 681.8,487.2 683.2,487.2 684.6,487.2 686.0,487.2 687.3,487.2 688.7,487.2 690.1,487.3 691.4,487.3 692.8,487.3 694.2,487.3 695.6,487.3 696.9,487.3 698.3,487.3 699.7,487.3 701.0,487.3 702.4,487.3 703.8,487.4 705.2,487.4 706.5,487.4 707.9,487.4 709.3,487.4 710.6,487.4 712.0,487.4 713.4,487.4 714.8,487.4 716.1,487.4 717.5,487.4 718.9,487.4 720.2,487.5 721.6,487.5 723.0,487.5 724.4,487.5 725.7,487.5 727.1,487.5 728.5,487.5 729.8,487.5 731.2,487.5 732.6,487.5 734.0,487.5 735.3,487.5 736.7,487.5 738.1,487.5 739.4,487.6 740.8,487.6 742.2,487.6 743.6,487.6 744.9,487.6 746.3,487.6 747.7,487.6 749.0,487.6 750.4,487.6 751.8,487.6 753.2,487.6 754.5,487.6 755.9,487.6 757.3,487.6 758.6,487.6 760.0,487.7 761.4,487.7 762.8,487.7 764.1,487.7 765.5,487.7 766.9,487.7 768.2,487.7 769.6,487.7 771.0,487.7 772.4,487.7 773.7,487.7 775.1,487.7 776.5,487.7 777.9,487.7 779.2,487.7 780.6,487.7 782.0,487.7 783.3,487.7 784.7,487.7 786.1,487.8 787.5,487.8 788.8,487.8 790.2,487.8 791.6,487.8 792.9,487.8 794.3,487.8 795.7,487.8 797.1,487.8 798.4,487.8 799.8,487.8 801.2,487.8 802.5,487.8 803.9,487.8 805.3,487.8 806.7,487.8 808.0,487.8 809.4,487.8 810.8,487.8 812.1,487.8 813.5,487.8 814.9,487.9 816.3,487.9 817.6,487.9"/><polyline stroke="#ff1010" stroke-width="1.2" points="137.4,487.5 138.7,485.9 140.1,484.4 141.5,482.9 142.8,481.4 144.2,479.9 145.6,478.4 147.0,476.9 148.3,475.4 149.7,474.0 151.1,472.5 152.4,471.1 153.8,469.6 155.2,468.2 156.6,466.8 157.9,465.4 159.3,464.0 160.7,462.6 162.0,461.2 163.4,459.8 164.8,458.4 166.2,457.1 167.5,455.7 168.9,454.3 170.3,453.0 171.6,451.6 173.0,450.3 174.4,449.0 175.8,447.6 177.1,446.3 178.5,445.0 179.9,443.7 181.2,442.4 182.6,441.0 184.0,439.7 185.4,438.4 186.7,437.1 188.1,437.4 189.5,437.7 190.8,437.9 192.2,438.2 193.6,438.5 195.0,438.8 196.3,439.1 197.7,439.4 199.1,439.7 200.4,440.1 201.8,440.4 203.2,440.8 204.6,441.1 205.9,441.5 207.3,441.9 208.7,442.2 210.0,442.6 211.4,443.0 212.8,443.4 214.2,443.9 215.5,444.3 216.9,444.7 218.3,445.2 219.7,445.6 221.0,446.1 222.4,446.6 223.8,447.0 225.1,447.5 226.5,448.0 227.9,448.5 229.3,449.0 230.6,449.6 232.0,450.1 233.4,450.6 234.7,451.2 236.1,451.7 237.5,452.3 238.9,452.9 240.2,453.4 241.6,453.9 243.0,454.5 244.3,455.0 245.7,455.5 247.1,456.0 248.5,456.5 249.8,457.0 251.2,457.5 252.6,458.0 253.9,458.5 255.3,458.9 256.7,459.4 258.1,459.8 259.4,460.3 260.8,460.7 262.2,461.2 263.5,461.6 264.9,462.0 266.3,462.4 267.7,462.8 269.0,463.2 270.4,463.6 271.8,464.0 273.1,464.4 274.5,464.8 275.9,465.1 277.3,465.5 278.6,465.8 280.0,466.2 281.4,466.5 282.7,466.9 284.1,467.2 285.5,467.5 286.9,467.8 288.2,468.1 289.6,468.4 291.0,468.7 292.3,469.0 293.7,469.3 295.1,469.5 296.5,469.8 297.8,470.1 299.2,470.3 300.6,470.6 301.9,470.8 303.3,471.1 304.7,471.3 306.1,471.5 307.4,471.7 308.8,472.0 310.2,472.2 311.5,472.4 312.9,472.6 314.3,472.8 315.7,473.0 317.0,473.2 318.4,473.4 319.8,473.6 321.1,473.7 322.5,473.9 323.9,474.1 325.3,474.3 326.6,474.4 328.0,474.6 329.4,474.7 330.7,474.9 332.1,475.1 333.5,475.2 334.9,475.4 336.2,475.5 337.6,475.6 339.0,475.8 340.3,475.9 341.7,476.0 343.1,476.2 344.5,476.3 345.8,476.4 347.2,476.5 348.6,476.7 349.9,476.8 351.3,476.9 352.7,477.0 354.1,477.1 355.4,477.2 356.8,477.3 358.2,477.4 359.5,477.6 360.9,477.7 362.3,477.8 363.7,477.9 365.0,478.0 366.4,478.1 367.8,478.1 369.1,478.2 370.5,478.3 371.9,478.4 373.3,478.5 374.6,478.6 376.0,478.7 377.4,478.8 378.7,478.9 380.1,478.9 381.5,479.0 382.9,479.1 384.2,479.2 385.6,479.3 387.0,479.3 388.3,479.4 389.7,479.5 391.1,479.6 392.5,479.6 393.8,479.7 395.2,479.8 396.6,479.9 397.9,479.9 399.3,480.0 400.7,480.1 402.1,480.1 403.4,480.2 404.8,480.3 406.2,480.3 407.5,480.4 408.9,480.5 410.3,480.5 411.7,480.6 413.0,480.6 414.4,480.7 415.8,480.8 417.1,480.8 418.5,480.9 419.9,480.9 421.3,481.0 422.6,481.1 424.0,481.1 425.4,481.2 426.7,481.2 428.1,481.3 429.5,481.3 430.9,481.4 432.2,481.5 433.6,481.5 435.0,481.6 436.3,481.6 437.7,481.7 439.1,481.7 440.5,481.8 441.8,481.8 443.2,481.9 444.6,481.9 445.9,482.0 447.3,482.0 448.7,482.1 450.1,482.1 451.4,482.2 452.8,482.2 454.2,482.3 455.5,482.3 456.9,482.4 458.3,482.4 459.7,482.4 461.0,482.5 462.4,482.5 463.8,482.6 465.1,482.6 466.5,482.7 467.9,482.7 469.3,482.8 470.6,482.8 472.0,482.8 473.4,482.9 474.7,482.9 476.1,483.0 477.5,483.0 478.9,483.0 480.2,483.1 481.6,483.1 483.0,483.2 484.3,483.2 485.7,483.2 487.1,483.3 488.5,483.3 489.8,483.3 491.2,483.4 492.6,483.4 493.9,483.5 495.3,483.5 496.7,483.5 498.1,483.6 499.4,483.6 500.8,483.6 502.2,483.7 503.6,483.7 504.9,483.7 506.3,483.8 507.7,483.8 509.0,483.8 510.4,483.9 511.8,483.9 513.2,483.9 514.5,484.0 515.9,484.0 517.3,484.0 518.6,484.1 520.0,484.1 521.4,484.1 522.8,484.2 524.1,484.2 525.5,484.2 526.9,484.2 528.2,484.3 529.6,484.3 531.0,484.3 532.4,484.4 533.7,484.4 535.1,484.4 536.5,484.4 537.8,484.5 539.2,484.5 540.6,484.5 542.0,484.6 543.3,484.6 544.7,484.6 546.1,484.6 547.4,484.7 548.8,484.7 550.2,484.7 551.6,484.7 552.9,484.8 554.3,484.8 555.7,484.8 557.0,484.8 558.4,484.9 559.8,484.9 561.2,484.9 562.5,484.9 563.9,484.9 565.3,485.0 566.6,485.0 568.0,485.0 569.4,485.0 570.8,485.1 572.1,485.1 573.5,485.1 574.9,485.1 576.2,485.1 577.6,485.2 579.0,485.2 580.4,485.2 581.7,485.2 583.1,485.2 584.5,485.3 585.8,485.3 587.2,485.3 588.6,485.3 590.0,485.3 591.3,485.4 592.7,485.4 594.1,485.4 595.4,485.4 596.8,485.4 598.2,485.5 599.6,485.5 600.9,485.5 602.3,485.5 603.7,485.5 605.0,485.5 606.4,485.6 607.8,485.6 609.2,485.6 610.5,485.6 611.9,485.6 613.3,485.6 614.6,485.7 616.0,485.7 617.4,485.7 618.8,485.7 620.1,485.7 621.5,485.7 622.9,485.8 624.2,485.8 625.6,485.8 627.0,485.8 628.4,485.8 629.7,485.8 631.1,485.8 632.5,485.9 633.8,485.9 635.2,485.9 636.6,485.9 638.0,485.9 639.3,485.9 640.7,485.9 642.1,486.0 643.4,486.0 644.8,486.0 646.2,486.0 647.6,486.0 648.9,486.0 650.3,486.0 651.7,486.0 653.0,486.1 654.4,486.1 655.8,486.1 657.2,486.1 658.5,486.1 659.9,486.1 661.3,486.1 662.6,486.1 664.0,486.2 665.4,486.2 666.8,486.2 668.1,486.2 669.5,486.2 670.9,486.2 672.2,486.2 673.6,486.2 675.0,486.2 676.4,486.3 677.7,486.3 679.1,486.3 680.5,486.3 681.8,486.3 683.2,486.3 684.6,486.3 686.0,486.3 687.3,486.3 688.7,486.3 690.1,486.4 691.4,486.4 692.8,486.4 694.2,486.4 695.6,486.4 696.9,486.4 698.3,486.4 699.7,486.4 701.0,486.4 702.4,486.4 703.8,486.5 705.2,486.5 706.5,486.5 707.9,486.5 709.3,486.5 710.6,486.5 712.0,486.5 713.4,486.5 714.8,486.5 716.1,486.5 717.5,486.5 718.9,486.5 720.2,486.6 721.6,486.6 723.0,486.6 724.4,486.6 725.7,486.6 727.1,486.6 728.5,486.6 729.8,486.6 731.2,486.6 732.6,486.6 734.0,486.6 735.3,486.6 736.7,486.6 738.1,486.6 739.4,486.7 740.8,486.7 742.2,486.7 743.6,486.7 744.9,486.7 746.3,486.7 747.7,486.7 749.0,486.7 750.4,486.7 751.8,486.7 753.2,486.7 754.5,486.7 755.9,486.7 757.3,486.7 758.6,486.7 760.0,486.8 761.4,486.8 762.8,486.8 764.1,486.8 765.5,486.8 766.9,486.8 768.2,486.8 769.6,486.8 771.0,486.8 772.4,486.8 773.7,486.8 775.1,486.8 776.5,486.8 777.9,486.8 779.2,486.8 780.6,486.8 782.0,486.8 783.3,486.8 784.7,486.8 786.1,486.9 787.5,486.9 788.8,486.9 790.2,486.9 791.6,486.9 792.9,486.9 794.3,486.9 795.7,486.9 797.1,486.9 798.4,486.9 799.8,486.9 801.2,486.9 802.5,486.9 803.9,486.9 805.3,486.9 806.7,486.9 808.0,486.9 809.4,486.9 810.8,486.9 812.1,486.9 813.5,486.9 814.9,487.0 816.3,487.0 817.6,487.0"/><polyline stroke="#e070ff" stroke-width="1.5" shape-rendering="auto" points="83,634.5 137.5,634.5"/><polyline stroke="#d070ff" stroke-width="1.2" points="137.5,487.5 906,487.5"/><polyline stroke="#38c838" stroke-width="1.2" points="186.7,313.6 188.1,317.0 189.5,320.4 190.8,323.6 192.2,326.9 193.6,330.1 195.0,333.3 196.3,336.4 197.7,339.5 199.1,342.5 200.4,345.5 201.8,348.5 203.2,351.4 204.6,354.3 205.9,357.2 207.3,360.0 208.7,362.8 210.0,365.6 211.4,368.4 212.8,371.1 214.2,373.7 215.5,376.4 216.9,379.0 218.3,381.6 219.7,384.1 221.0,386.7 222.4,389.2 223.8,391.7 225.1,394.1 226.5,396.5 227.9,398.9 229.3,401.3 230.6,403.7 232.0,406.0 233.4,408.3 234.7,410.6 236.1,412.9 237.5,415.1 238.9,417.3 240.2,419.4 241.6,421.4 243.0,423.3 244.3,425.2 245.7,427.0 247.1,428.8 248.5,430.4 249.8,432.1 251.2,433.6 252.6,435.1 253.9,436.6 255.3,438.0 256.7,439.3 258.1,440.6 259.4,441.9 260.8,443.1 262.2,444.2 263.5,445.3 264.9,446.4 266.3,447.4 267.7,448.3 269.0,449.2 270.4,450.1 271.8,450.9 273.1,451.7 274.5,452.5 275.9,453.2 277.3,453.9 278.6,454.5 280.0,455.1 281.4,455.7 282.7,456.2 284.1,456.7 285.5,457.1 286.9,457.6 288.2,458.0 289.6,458.3 291.0,458.7 292.3,459.0 293.7,459.3 295.1,459.5 296.5,459.7 297.8,459.9 299.2,460.1 300.6,460.3 301.9,460.4 303.3,460.5 304.7,460.6 306.1,460.7 307.4,460.8 308.8,460.8 310.2,460.8 311.5,460.8 312.9,460.8 314.3,460.8 315.7,460.8 317.0,460.7 318.4,460.7 319.8,460.6 321.1,460.5 322.5,460.4 323.9,460.3 325.3,460.2 326.6,460.0 328.0,459.9 329.4,459.8 330.7,459.6 332.1,459.5 333.5,459.3 334.9,459.1 336.2,458.9 337.6,458.8 339.0,458.6 340.3,458.4 341.7,458.2 343.1,458.0 344.5,457.8 345.8,457.6 347.2,457.4 348.6,457.1 349.9,456.9 351.3,456.7 352.7,456.5 354.1,456.3 355.4,456.0 356.8,455.8 358.2,455.6 359.5,455.3 360.9,455.1 362.3,454.9 363.7,454.7 365.0,454.4 366.4,454.2 367.8,454.0 369.1,453.7 370.5,453.5 371.9,453.3 373.3,453.0 374.6,452.8 376.0,452.6 377.4,452.3 378.7,452.1 380.1,451.9 381.5,451.7 382.9,451.5 384.2,451.2 385.6,451.0 387.0,450.8 388.3,450.6 389.7,450.4 391.1,450.1 392.5,449.9 393.8,449.7 395.2,449.5 396.6,449.3 397.9,449.1 399.3,448.9 400.7,448.7 402.1,448.5 403.4,448.3 404.8,448.1 406.2,447.9 407.5,447.7 408.9,447.5 410.3,447.3 411.7,447.1 413.0,447.0 414.4,446.8 415.8,446.6 417.1,446.4 418.5,446.2 419.9,446.1 421.3,445.9 422.6,445.7 424.0,445.5 425.4,445.4 426.7,445.2 428.1,445.0 429.5,444.9 430.9,444.7 432.2,444.6 433.6,444.4 435.0,444.3 436.3,444.1 437.7,443.9 439.1,443.8 440.5,443.7 441.8,443.5 443.2,443.4 444.6,443.2 445.9,443.1 447.3,442.9 448.7,442.8 450.1,442.7 451.4,442.5 452.8,442.4 454.2,442.3 455.5,442.1 456.9,442.0 458.3,441.9 459.7,441.7 461.0,441.6 462.4,441.5 463.8,441.4 465.1,441.3 466.5,441.1 467.9,441.0 469.3,440.9 470.6,440.8 472.0,440.7 473.4,440.6 474.7,440.5 476.1,440.3 477.5,440.2 478.9,440.1 480.2,440.0 481.6,439.9 483.0,439.8 484.3,439.7 485.7,439.6 487.1,439.5 488.5,439.4 489.8,439.3 491.2,439.2 492.6,439.1 493.9,439.0 495.3,438.9 496.7,438.8 498.1,438.7 499.4,438.7 500.8,438.6 502.2,438.5 503.6,438.4 504.9,438.3 506.3,438.2 507.7,438.1 509.0,438.0 510.4,438.0 511.8,437.9 513.2,437.8 514.5,437.7 515.9,437.6 517.3,437.6 518.6,437.5 520.0,437.4 521.4,437.3 522.8,437.2 524.1,437.2 525.5,437.1 526.9,437.0 528.2,436.9 529.6,436.9 531.0,436.8 532.4,436.7 533.7,436.7 535.1,436.6 536.5,436.5 537.8,436.5 539.2,436.4 540.6,436.3 542.0,436.3 543.3,436.2 544.7,436.1 546.1,436.1 547.4,436.0 548.8,435.9 550.2,435.9 551.6,435.8 552.9,435.7 554.3,435.7 555.7,435.6 557.0,435.6 558.4,435.5 559.8,435.4 561.2,435.4 562.5,435.3 563.9,435.3 565.3,435.2 566.6,435.2 568.0,435.1 569.4,435.1 570.8,435.0 572.1,434.9 573.5,434.9 574.9,434.8 576.2,434.8 577.6,434.7 579.0,434.7 580.4,434.6 581.7,434.6 583.1,434.5 584.5,434.5 585.8,434.4 587.2,434.4 588.6,434.3 590.0,434.3 591.3,434.2 592.7,434.2 594.1,434.2 595.4,434.1 596.8,434.1 598.2,434.0 599.6,434.0 600.9,433.9 602.3,433.9 603.7,433.8 605.0,433.8 606.4,433.8 607.8,433.7 609.2,433.7 610.5,433.6 611.9,433.6 613.3,433.5 614.6,433.5 616.0,433.5 617.4,433.4 618.8,433.4 620.1,433.3 621.5,433.3 622.9,433.3 624.2,433.2 625.6,433.2 627.0,433.2 628.4,433.1 629.7,433.1 631.1,433.1 632.5,433.0 633.8,433.0 635.2,432.9 636.6,432.9 638.0,432.9 639.3,432.8 640.7,432.8 642.1,432.8 643.4,432.7 644.8,432.7 646.2,432.7 647.6,432.6 648.9,432.6 650.3,432.6 651.7,432.6 653.0,432.5 654.4,432.5 655.8,432.5 657.2,432.4 658.5,432.4 659.9,432.4 661.3,432.3 662.6,432.3 664.0,432.3 665.4,432.3 666.8,432.2 668.1,432.2 669.5,432.2 670.9,432.1 672.2,432.1 673.6,432.1 675.0,432.1 676.4,432.0 677.7,432.0 679.1,432.0 680.5,432.0 681.8,431.9 683.2,431.9 684.6,431.9 686.0,431.9 687.3,431.8 688.7,431.8 690.1,431.8 691.4,431.8 692.8,431.7 694.2,431.7 695.6,431.7 696.9,431.7 698.3,431.6 699.7,431.6 701.0,431.6 702.4,431.6 703.8,431.6 705.2,431.5 706.5,431.5 707.9,431.5 709.3,431.5 710.6,431.5 712.0,431.4 713.4,431.4 714.8,431.4 716.1,431.4 717.5,431.4 718.9,431.3 720.2,431.3 721.6,431.3 723.0,431.3 724.4,431.3 725.7,431.2 727.1,431.2 728.5,431.2 729.8,431.2 731.2,431.2 732.6,431.1 734.0,431.1 735.3,431.1 736.7,431.1 738.1,431.1 739.4,431.1 740.8,431.0 742.2,431.0 743.6,431.0 744.9,431.0 746.3,431.0 747.7,431.0 749.0,430.9 750.4,430.9 751.8,430.9 753.2,430.9 754.5,430.9 755.9,430.9 757.3,430.8 758.6,430.8 760.0,430.8 761.4,430.8 762.8,430.8 764.1,430.8 765.5,430.8 766.9,430.7 768.2,430.7 769.6,430.7 771.0,430.7 772.4,430.7 773.7,430.7 775.1,430.7 776.5,430.6 777.9,430.6 779.2,430.6 780.6,430.6 782.0,430.6 783.3,430.6 784.7,430.6 786.1,430.6 787.5,430.5 788.8,430.5 790.2,430.5 791.6,430.5 792.9,430.5 794.3,430.5 795.7,430.5 797.1,430.5 798.4,430.5 799.8,430.4 801.2,430.4 802.5,430.4 803.9,430.4 805.3,430.4 806.7,430.4 808.0,430.4 809.4,430.4 810.8,430.4 812.1,430.3 813.5,430.3 814.9,430.3 816.3,430.3 817.6,430.3 819.0,430.3 820.4,430.3 821.7,430.3 823.1,430.3 824.5,430.3 825.9,430.2 827.2,430.2 828.6,430.2 830.0,430.2 831.3,430.2 832.7,430.2 834.1,430.2 835.5,430.2 836.8,430.2 838.2,430.2 839.6,430.2 840.9,430.1 842.3,430.1 843.7,430.1 845.1,430.1 846.4,430.1 847.8,430.1 849.2,430.1 850.5,430.1 851.9,430.1 853.3,430.1 854.7,430.1 856.0,430.1 857.4,430.0 858.8,430.0 860.1,430.0 861.5,430.0 862.9,430.0 864.3,430.0 865.6,430.0 867.0,430.0 868.4,430.0 869.7,430.0 871.1,430.0 872.5,430.0 873.9,430.0 875.2,430.0 876.6,429.9 878.0,429.9 879.3,429.9 880.7,429.9 882.1,429.9 883.5,429.9 884.8,429.9 886.2,429.9 887.6,429.9 888.9,429.9 890.3,429.9 891.7,429.9 893.1,429.9 894.4,429.9 895.8,429.9 897.2,429.9 898.5,429.9 899.9,429.8 901.3,429.8 902.7,429.8 904.0,429.8 905.4,429.8"/><polyline stroke="#101010" stroke-width="1" points="137.5,429.5 906,429.5"/><polyline stroke="#ffa07a" stroke-width="1.2" points="82.5,429.2 83.9,429.2 85.2,429.2 86.6,429.2 88.0,429.2 89.4,429.2 90.7,429.2 92.1,429.2 93.5,429.2 94.8,429.2 96.2,429.2 97.6,429.2 99.0,429.2 100.3,429.2 101.7,429.2 103.1,429.2 104.4,429.2 105.8,429.2 107.2,429.2 108.6,429.2 109.9,429.2 111.3,429.2 112.7,429.2 114.0,429.2 115.4,429.2 116.8,429.2 118.2,429.2 119.5,429.2 120.9,429.2 122.3,429.2 123.6,429.2 125.0,429.2 126.4,429.2 127.8,429.2 129.1,429.2 130.5,429.2 131.9,429.2 133.2,429.2 134.6,429.2 136.0,429.2 137.4,429.2 138.7,424.1 140.1,419.1 141.5,414.3 142.8,409.6 144.2,405.0 145.6,400.6 147.0,396.3 148.3,392.1 149.7,388.0 151.1,384.1 152.4,380.3 153.8,376.6 155.2,373.0 156.6,369.5 157.9,366.1 159.3,362.8 160.7,359.6 162.0,356.4 163.4,353.4 164.8,350.5 166.2,347.6 167.5,344.9 168.9,342.2 170.3,339.6 171.6,337.1 173.0,334.6 174.4,332.2 175.8,329.9 177.1,327.7 178.5,325.5 179.9,323.3 181.2,321.3 182.6,319.3 184.0,317.4 185.4,315.5 186.7,313.6 188.1,311.9 189.5,310.1 190.8,308.5 192.2,306.8 193.6,305.3 195.0,303.7 196.3,302.2 197.7,300.8 199.1,299.4 200.4,298.0 201.8,296.7 203.2,295.4 204.6,294.2 205.9,293.0 207.3,291.8 208.7,290.7 210.0,289.5 211.4,288.5 212.8,287.4 214.2,286.4 215.5,285.4 216.9,284.5 218.3,283.5 219.7,282.6 221.0,281.8 222.4,280.9 223.8,280.1 225.1,279.3 226.5,278.5 227.9,277.8 229.3,277.0 230.6,276.3 232.0,275.6 233.4,275.0 234.7,274.3 236.1,273.7 237.5,273.1 238.9,272.5 240.2,271.9 241.6,271.3 243.0,270.8 244.3,270.2 245.7,269.7 247.1,269.2 248.5,268.7 249.8,268.3 251.2,267.8 252.6,267.4 253.9,266.9 255.3,266.5 256.7,266.1 258.1,265.7 259.4,265.3 260.8,265.0 262.2,264.6 263.5,264.3 264.9,263.9 266.3,263.6 267.7,263.3 269.0,262.9 270.4,262.6 271.8,262.4 273.1,262.1 274.5,261.8 275.9,261.5 277.3,261.3 278.6,261.0 280.0,260.8 281.4,260.5 282.7,260.3 284.1,260.1 285.5,259.8 286.9,259.6 288.2,259.4 289.6,259.2 291.0,259.0 292.3,258.8 293.7,258.7 295.1,258.5 296.5,258.3 297.8,258.1 299.2,258.0 300.6,257.8 301.9,257.7 303.3,257.5 304.7,257.4 306.1,257.2 307.4,257.1 308.8,257.0 310.2,256.8 311.5,256.7 312.9,256.6 314.3,256.5 315.7,256.4 317.0,256.2 318.4,256.1 319.8,256.0 321.1,255.9 322.5,255.8 323.9,255.7 325.3,255.6 326.6,255.6 328.0,255.5 329.4,255.4 330.7,255.3 332.1,255.2 333.5,255.1 334.9,255.1 336.2,255.0 337.6,254.9 339.0,254.9 340.3,254.8 341.7,254.7 343.1,254.7 344.5,254.6 345.8,254.5 347.2,254.5 348.6,254.4 349.9,254.4 351.3,254.3 352.7,254.3 354.1,254.2 355.4,254.2 356.8,254.1 358.2,254.1 359.5,254.0 360.9,254.0 362.3,253.9 363.7,253.9 365.0,253.9 366.4,253.8 367.8,253.8 369.1,253.7 370.5,253.7 371.9,253.7 373.3,253.6 374.6,253.6 376.0,253.6 377.4,253.6 378.7,253.5 380.1,253.5 381.5,253.5 382.9,253.4 384.2,253.4 385.6,253.4 387.0,253.4 388.3,253.3 389.7,253.3 391.1,253.3 392.5,253.3 393.8,253.3 395.2,253.2 396.6,253.2 397.9,253.2 399.3,253.2 400.7,253.2 402.1,253.1 403.4,253.1 404.8,253.1 406.2,253.1 407.5,253.1 408.9,253.1 410.3,253.0 411.7,253.0 413.0,253.0 414.4,253.0 415.8,253.0 417.1,253.0 418.5,253.0 419.9,252.9 421.3,252.9 422.6,252.9 424.0,252.9 425.4,252.9 426.7,252.9 428.1,252.9 429.5,252.9 430.9,252.9 432.2,252.9 433.6,252.8 435.0,252.8 436.3,252.8 437.7,252.8 439.1,252.8 440.5,252.8 441.8,252.8 443.2,252.8 444.6,252.8 445.9,252.8 447.3,252.8 448.7,252.8 450.1,252.8 451.4,252.7 452.8,252.7 454.2,252.7 455.5,252.7 456.9,252.7 458.3,252.7 459.7,252.7 461.0,252.7 462.4,252.7 463.8,252.7 465.1,252.7 466.5,252.7 467.9,252.7 469.3,252.7 470.6,252.7 472.0,252.7 473.4,252.7 474.7,252.7 476.1,252.7 477.5,252.7 478.9,252.7 480.2,252.7 481.6,252.6 483.0,252.6 484.3,252.6 485.7,252.6 487.1,252.6 488.5,252.6 489.8,252.6 491.2,252.6 492.6,252.6 493.9,252.6 495.3,252.6 496.7,252.6 498.1,252.6 499.4,252.6 500.8,252.6 502.2,252.6 503.6,252.6 504.9,252.6 506.3,252.6 507.7,252.6 509.0,252.6 510.4,252.6 511.8,252.6 513.2,252.6 514.5,252.6 515.9,252.6 517.3,252.6 518.6,252.6 520.0,252.6 521.4,252.6 522.8,252.6 524.1,252.6 525.5,252.6 526.9,252.6 528.2,252.6 529.6,252.6 531.0,252.6 532.4,252.6 533.7,252.6 535.1,252.6 536.5,252.6 537.8,252.6 539.2,252.6 540.6,252.6 542.0,252.6 543.3,252.6 544.7,252.6 546.1,252.6 547.4,252.6 548.8,252.6 550.2,252.6 551.6,252.6 552.9,252.6 554.3,252.6 555.7,252.6 557.0,252.6 558.4,252.6 559.8,252.6 561.2,252.6 562.5,252.6 563.9,252.6 565.3,252.6 566.6,252.6 568.0,252.6 569.4,252.6 570.8,252.6 572.1,252.6 573.5,252.6 574.9,252.6 576.2,252.6 577.6,252.6 579.0,252.6 580.4,252.6 581.7,252.6 583.1,252.6 584.5,252.6 585.8,252.6 587.2,252.6 588.6,252.6 590.0,252.6 591.3,252.6 592.7,252.5 594.1,252.5 595.4,252.5 596.8,252.5 598.2,252.5 599.6,252.5 600.9,252.5 602.3,252.5 603.7,252.5 605.0,252.5 606.4,252.5 607.8,252.5 609.2,252.5 610.5,252.5 611.9,252.5 613.3,252.5 614.6,252.5 616.0,252.5 617.4,252.5 618.8,252.5 620.1,252.5 621.5,252.5 622.9,252.5 624.2,252.5 625.6,252.5 627.0,252.5 628.4,252.5 629.7,252.5 631.1,252.5 632.5,252.5 633.8,252.5 635.2,252.5 636.6,252.5 638.0,252.5 639.3,252.5 640.7,252.5 642.1,252.5 643.4,252.5 644.8,252.5 646.2,252.5 647.6,252.5 648.9,252.5 650.3,252.5 651.7,252.5 653.0,252.5 654.4,252.5 655.8,252.5 657.2,252.5 658.5,252.5 659.9,252.5 661.3,252.5 662.6,252.5 664.0,252.5 665.4,252.5 666.8,252.5 668.1,252.5 669.5,252.5 670.9,252.5 672.2,252.5 673.6,252.5 675.0,252.5 676.4,252.5 677.7,252.5 679.1,252.5 680.5,252.5 681.8,252.5 683.2,252.5 684.6,252.5 686.0,252.5 687.3,252.5 688.7,252.5 690.1,252.5 691.4,252.5 692.8,252.5 694.2,252.5 695.6,252.5 696.9,252.5 698.3,252.5 699.7,252.5 701.0,252.5 702.4,252.5 703.8,252.5 705.2,252.5 706.5,252.5 707.9,252.5 709.3,252.5 710.6,252.5 712.0,252.5 713.4,252.5 714.8,252.5 716.1,252.5 717.5,252.5 718.9,252.5 720.2,252.5 721.6,252.5 723.0,252.5 724.4,252.5 725.7,252.5 727.1,252.5 728.5,252.5 729.8,252.5 731.2,252.5 732.6,252.5 734.0,252.5 735.3,252.5 736.7,252.5 738.1,252.5 739.4,252.5 740.8,252.5 742.2,252.5 743.6,252.5 744.9,252.5 746.3,252.5 747.7,252.5 749.0,252.5 750.4,252.5 751.8,252.5 753.2,252.5 754.5,252.5 755.9,252.5 757.3,252.5 758.6,252.5 760.0,252.5 761.4,252.5 762.8,252.5 764.1,252.5 765.5,252.5 766.9,252.5 768.2,252.5 769.6,252.5 771.0,252.5 772.4,252.5 773.7,252.5 775.1,252.5 776.5,252.5 777.9,252.5 779.2,252.5 780.6,252.5 782.0,252.5 783.3,252.5 784.7,252.5 786.1,252.5 787.5,252.5 788.8,252.5 790.2,252.5 791.6,252.5 792.9,252.5 794.3,252.5 795.7,252.5 797.1,252.5 798.4,252.5 799.8,252.5 801.2,252.5 802.5,252.5 803.9,252.5 805.3,252.5 806.7,252.5 808.0,252.5 809.4,252.5 810.8,252.5 812.1,252.5 813.5,252.5 814.9,252.5 816.3,252.5 817.6,252.5 819.0,252.5 820.4,252.5 821.7,252.5 823.1,252.5 824.5,252.5 825.9,252.5 827.2,252.5 828.6,252.5 830.0,252.5 831.3,252.5 832.7,252.5 834.1,252.5 835.5,252.5 836.8,252.5 838.2,252.5 839.6,252.5 840.9,252.5 842.3,252.5 843.7,252.5 845.1,252.5 846.4,252.5 847.8,252.5 849.2,252.5 850.5,252.5 851.9,252.5 853.3,252.5 854.7,252.5 856.0,252.5 857.4,252.5 858.8,252.5 860.1,252.5 861.5,252.5 862.9,252.5 864.3,252.5 865.6,252.5 867.0,252.5 868.4,252.5 869.7,252.5 871.1,252.5 872.5,252.5 873.9,252.5 875.2,252.5 876.6,252.5 878.0,252.5 879.3,252.5 880.7,252.5 882.1,252.5 883.5,252.5 884.8,252.5 886.2,252.5 887.6,252.5 888.9,252.5 890.3,252.5 891.7,252.5 893.1,252.5 894.4,252.5 895.8,252.5 897.2,252.5 898.5,252.5 899.9,252.5 901.3,252.5 902.7,252.5 904.0,252.5 905.4,252.5"/><polyline stroke="#7c4c48" stroke-width="1" points="83,275.5 137.5,275.5 137.5,217.5 906,217.5"/></g></svg>
<div class="t k" style="left:4.50px;top:657.80px;font-size:8.5px;color:#101010;font-weight:bold;">Show</div>
<div class="t n" style="left:27.40px;top:669.83px;font-size:8.0px;color:#a06060;font-weight:normal;-webkit-text-stroke-width:0.05px;">Disturbance</div>
<div class="t n" style="left:27.40px;top:679.61px;font-size:8.0px;color:#ff9966;font-weight:normal;-webkit-text-stroke-width:0.05px;">Effect of Disturbance on PV</div>
<div class="t n" style="left:27.40px;top:689.39px;font-size:8.0px;color:#000000;font-weight:normal;-webkit-text-stroke-width:0.05px;">Setpoint</div>
<div class="t n" style="left:27.40px;top:699.17px;font-size:8.0px;color:#a0a088;font-weight:normal;-webkit-text-stroke-width:0.05px;">PV in Digital Form</div>
<div class="t n" style="left:27.40px;top:708.95px;font-size:8.0px;color:#00c000;font-weight:normal;-webkit-text-stroke-width:0.05px;">PV in Analog Form</div>
<div class="t n" style="left:27.40px;top:718.73px;font-size:8.0px;color:#cc44ff;font-weight:normal;-webkit-text-stroke-width:0.05px;">Feed-Forward Output</div>
<div class="t n" style="left:27.40px;top:728.51px;font-size:8.0px;color:#ff0000;font-weight:normal;-webkit-text-stroke-width:0.05px;">Output in Digital Form</div>
<div class="t n" style="left:27.40px;top:738.29px;font-size:8.0px;color:#60a0a8;font-weight:normal;-webkit-text-stroke-width:0.05px;">Output in Analog Form</div>
<div class="t n" style="left:27.40px;top:748.07px;font-size:8.0px;color:#8000ff;font-weight:normal;-webkit-text-stroke-width:0.05px;">Actual Movement of Valve</div>
<svg class="b" style="left:0;top:0" width="170" height="768" viewBox="0 0 170 768"><rect x="10.5" y="668.50" width="9" height="9.28" fill="#fff" stroke="#000" stroke-width="1.1"/><path d="M11 669.00 L19 677.28 M19 669.00 L11 677.28" stroke="#303030" stroke-width="0.8"/><polyline fill="none" stroke="#a06060" stroke-width="1" points="140,677.58 144.5,669.20 150,677.58 155.5,669.20 161,677.58"/><rect x="10.5" y="678.28" width="9" height="9.28" fill="#fff" stroke="#000" stroke-width="1.1"/><path d="M11 678.78 L19 687.06 M19 678.78 L11 687.06" stroke="#303030" stroke-width="0.8"/><polyline fill="none" stroke="#ff9966" stroke-width="1" points="140,687.36 144.5,678.98 150,687.36 155.5,678.98 161,687.36"/><rect x="10.5" y="688.06" width="9" height="9.28" fill="#fff" stroke="#000" stroke-width="1.1"/><path d="M11 688.56 L19 696.84 M19 688.56 L11 696.84" stroke="#303030" stroke-width="0.8"/><polyline fill="none" stroke="#000000" stroke-width="1" points="140,697.14 144.5,688.76 150,697.14 155.5,688.76 161,697.14"/><rect x="10.5" y="697.84" width="9" height="9.28" fill="#fff" stroke="#000" stroke-width="1.1"/><polyline fill="none" stroke="#a0a088" stroke-width="1" points="140,706.92 144.5,698.54 150,706.92 155.5,698.54 161,706.92"/><rect x="10.5" y="707.62" width="9" height="9.28" fill="#fff" stroke="#000" stroke-width="1.1"/><path d="M11 708.12 L19 716.40 M19 708.12 L11 716.40" stroke="#303030" stroke-width="0.8"/><polyline fill="none" stroke="#00c000" stroke-width="1" points="140,716.70 144.5,708.32 150,716.70 155.5,708.32 161,716.70"/><rect x="10.5" y="717.40" width="9" height="9.28" fill="#fff" stroke="#000" stroke-width="1.1"/><path d="M11 717.90 L19 726.18 M19 717.90 L11 726.18" stroke="#303030" stroke-width="0.8"/><polyline fill="none" stroke="#cc44ff" stroke-width="1" points="140,726.48 144.5,718.10 150,726.48 155.5,718.10 161,726.48"/><rect x="10.5" y="727.18" width="9" height="9.28" fill="#fff" stroke="#000" stroke-width="1.1"/><path d="M11 727.68 L19 735.96 M19 727.68 L11 735.96" stroke="#303030" stroke-width="0.8"/><polyline fill="none" stroke="#ff0000" stroke-width="1" points="140,736.26 144.5,727.88 150,736.26 155.5,727.88 161,736.26"/><rect x="10.5" y="736.96" width="9" height="9.28" fill="#fff" stroke="#000" stroke-width="1.1"/><polyline fill="none" stroke="#60a0a8" stroke-width="1" points="140,746.04 144.5,737.66 150,746.04 155.5,737.66 161,746.04"/><rect x="10.5" y="746.74" width="9" height="9.28" fill="#fff" stroke="#000" stroke-width="1.1"/><path d="M11 747.24 L19 755.52 M19 747.24 L11 755.52" stroke="#303030" stroke-width="0.8"/><polyline fill="none" stroke="#8000ff" stroke-width="1" points="140,755.82 144.5,747.44 150,755.82 155.5,747.44 161,755.82"/><rect x="139.5" y="667.5" width="22" height="88.5" fill="none" stroke="#202020" stroke-width="1"/></svg>
<div class="t k" style="left:-15.20px;width:600px;text-align:center;top:674.20px;font-size:9.8px;color:#101010;font-weight:bold;">Seconds</div>
<div class="t k" style="left:363.40px;width:600px;text-align:center;top:689.05px;font-size:10.1px;color:#101010;font-weight:bold;">Absolute Error</div>
<div class="t k" style="left:612.20px;top:698.21px;font-size:9.5px;color:#101010;font-weight:bold;">Integrated</div>
<div class="t k" style="left:671.25px;top:698.55px;font-size:9.1px;color:#101010;font-weight:bold;">Average</div>
<div class="b" style="left:612px;top:709px;width:50px;height:15px;border:1px solid #202020;border-right-color:#505050;border-bottom-color:#505050;box-sizing:border-box"></div>
<div class="b" style="left:666px;top:709px;width:50px;height:15px;border:1px solid #202020;border-right-color:#505050;border-bottom-color:#505050;box-sizing:border-box"></div>
<div class="t n" style="left:613.50px;top:711.82px;font-size:9.9px;color:#000;font-weight:normal;">267.108</div>
<div class="t n" style="left:667.50px;top:711.82px;font-size:9.9px;color:#000;font-weight:normal;">0.88962</div>
<div class="t k" style="left:727.00px;top:687.55px;font-size:8.8px;color:#101010;font-weight:bold;">Stats:</div>
<svg class="b" style="left:724.6px;top:698px" width="12" height="12" viewBox="0 0 12 12"><circle cx="6" cy="6" r="5.2" fill="#fff" stroke="#202020" stroke-width="1"/></svg>
<svg class="b" style="left:724.6px;top:712px" width="12" height="12" viewBox="0 0 12 12"><circle cx="6" cy="6" r="5.2" fill="#fff" stroke="#202020" stroke-width="1"/><circle cx="6" cy="6" r="3" fill="#000"/></svg>
<div class="t k" style="left:738.75px;top:699.97px;font-size:8.9px;color:#101010;font-weight:bold;">Extents</div>
<div class="t k" style="left:738.75px;top:713.72px;font-size:8.6px;color:#101010;font-weight:bold;">Region</div>
<div class="b" style="left:607px;top:726px;width:63px;height:15px;background:#f0f0f0;border-top:1px solid #fff;border-left:1px solid #fff;border-right:2px solid #6a6a6a;border-bottom:2px solid #6a6a6a;box-sizing:border-box"></div>
<div class="t k" style="left:338.50px;width:600px;text-align:center;top:728.59px;font-size:10.05px;color:#101010;font-weight:bold;">Cursor</div>
<div class="b" style="left:607px;top:742px;width:63px;height:15.5px;background:#f0f0f0;border-top:1px solid #fff;border-left:1px solid #fff;border-right:2px solid #6a6a6a;border-bottom:2px solid #6a6a6a;box-sizing:border-box"></div>
<div class="t k" style="left:338.50px;width:600px;text-align:center;top:744.84px;font-size:10.05px;color:#101010;font-weight:bold;">Copy</div>
<div class="b" style="left:673px;top:726px;width:101px;height:15px;background:#f0f0f0;border-top:1px solid #fff;border-left:1px solid #fff;border-right:2px solid #6a6a6a;border-bottom:2px solid #6a6a6a;box-sizing:border-box"></div>
<div class="t k" style="left:417.00px;width:600px;text-align:center;top:728.59px;font-size:10.05px;color:#101010;font-weight:bold;">Grid Off</div>
<svg class="b" style="left:761px;top:730.0px" width="10" height="6" viewBox="0 0 10 6"><path d="M0 0 H10 L5 6 Z" fill="#000"/></svg>
<div class="b" style="left:673px;top:742px;width:101px;height:15.5px;background:#f0f0f0;border-top:1px solid #fff;border-left:1px solid #fff;border-right:2px solid #6a6a6a;border-bottom:2px solid #6a6a6a;box-sizing:border-box"></div>
<div class="t k" style="left:423.50px;width:600px;text-align:center;top:744.88px;font-size:10px;color:#101010;font-weight:bold;">Colour Settings</div>
<svg class="b" style="left:718px;top:654px" width="50" height="32" viewBox="0 0 50 32">
<rect x="0.5" y="1.5" width="14" height="29" fill="#bcbcc4" stroke="#a8a8b0" stroke-width="1"/>
<rect x="17.5" y="0.5" width="31" height="30" fill="#bcbcc4" stroke="#9c9ca4" stroke-width="1"/>
<path d="M17.5 30.5 H48.5 V0.5" fill="none" stroke="#808088" stroke-width="1"/>
<g fill="none" stroke="#000">
<path d="M4.5 5 V10.5 H11" stroke-width="1.3"/><path d="M1.8 13.2 L4.5 10.5" stroke-width="1"/><path d="M8 4 L10.5 6.5 M10.5 4 L8 6.5" stroke-width="1.1" stroke="#000"/>
<path d="M4.5 18 V23.5 H11" stroke-width="1.3"/><path d="M1.8 26.2 L4.5 23.5" stroke-width="1"/><path d="M8 17.5 L9.3 19.5 L10.6 17.5 M9.3 19.5 V21.5" stroke-width="1.1" stroke="#000"/>
</g>
<rect x="19.5" y="3.5" width="12" height="11" fill="none" stroke="#d4d4dc" stroke-width="1"/>
<rect x="34.5" y="3.5" width="12" height="11" fill="#c4c4cc" stroke="#84848c" stroke-width="1"/>
<rect x="19.5" y="17.5" width="12" height="11" fill="none" stroke="#d4d4dc" stroke-width="1"/>
<rect x="34.5" y="17.5" width="12" height="11" fill="none" stroke="#d4d4dc" stroke-width="1"/>
<g fill="none" stroke="#000">
<circle cx="27.6" cy="7.6" r="3.2" stroke-width="1.2"/><path d="M27.6 6 V9.2 M26 7.6 H29.2" stroke-width="0.8"/>
<path d="M25.3 10 L21 14" stroke-width="1.4" stroke-dasharray="1.2 0.6"/>
<path d="M30 10.5 L31 13.5" stroke-width="1"/>
<path d="M37 8.5 H44.5 M40.7 4.7 V12.3" stroke-width="1.3"/>
<path d="M21.3 24 Q21 21.5 22.2 21 L23 22.5 V19.2 Q24 18.2 25 19 V18.2 Q26.2 17.4 27.2 18.4 V19.2 Q28.4 18.8 29 19.8 V24.5 Q28.5 27.8 25.5 27.8 Q22.5 27.8 21.3 24 Z" stroke-width="1"/>
<path d="M35.5 22 L38 19.5 L40.5 22 L43 19.5 L45.5 22 M35.5 25 L38 22.5 L40.5 25 L43 22.5 L45.5 25 M35.5 28 L38 25.5 L40.5 28 L43 25.5 L45.5 28" stroke-width="1.1" stroke-dasharray="1 0.7"/>
</g></svg>
<div class="b" style="left:773px;top:655px;width:76px;height:14px;background:#c0c0c0;border-top:1px solid #e8e8e8;border-left:1px solid #e8e8e8;border-right:2px solid #606060;border-bottom:2px solid #606060;box-sizing:border-box"></div>
<div class="t n" style="left:774.50px;top:658.88px;font-size:7.7px;color:#000020;font-weight:normal;">Maximum</div>
<svg class="b" style="left:837px;top:659.3px" width="11" height="6" viewBox="0 0 11 6"><path d="M0 0 H11 L5.5 6 Z" fill="#000"/></svg>
<div class="b" style="left:856px;top:655px;width:76px;height:14px;background:#c0c0c0;border-top:1px solid #e8e8e8;border-left:1px solid #e8e8e8;border-right:2px solid #606060;border-bottom:2px solid #606060;box-sizing:border-box"></div>
<div class="t n" style="left:857.50px;top:658.88px;font-size:7.7px;color:#000020;font-weight:normal;">Minimum</div>
<svg class="b" style="left:920px;top:659.3px" width="11" height="6" viewBox="0 0 11 6"><path d="M0 0 H11 L5.5 6 Z" fill="#000"/></svg>
<div class="t n" style="right:126.00px;text-align:right;top:669.79px;font-size:9.4px;color:#a06060;font-weight:normal;">55.0000</div>
<div class="t n" style="right:44.00px;text-align:right;top:669.79px;font-size:9.4px;color:#a06060;font-weight:normal;">45.0000</div>
<div class="t n" style="right:126.00px;text-align:right;top:679.54px;font-size:9.4px;color:#ff9966;font-weight:normal;">410.000</div>
<div class="t n" style="right:44.00px;text-align:right;top:679.54px;font-size:9.4px;color:#ff9966;font-weight:normal;">400.000</div>
<div class="t n" style="right:126.00px;text-align:right;top:689.29px;font-size:9.4px;color:#000000;font-weight:normal;">400.000</div>
<div class="t n" style="right:44.00px;text-align:right;top:689.29px;font-size:9.4px;color:#000000;font-weight:normal;">400.000</div>
<div class="t n" style="right:126.00px;text-align:right;top:699.04px;font-size:9.4px;color:#a0a088;font-weight:normal;">406.531</div>
<div class="t n" style="right:44.00px;text-align:right;top:699.04px;font-size:9.4px;color:#a0a088;font-weight:normal;">398.212</div>
<div class="t n" style="right:126.00px;text-align:right;top:708.79px;font-size:9.4px;color:#00c000;font-weight:normal;">406.531</div>
<div class="t n" style="right:44.00px;text-align:right;top:708.79px;font-size:9.4px;color:#00c000;font-weight:normal;">398.212</div>
<div class="t n" style="right:126.00px;text-align:right;top:718.54px;font-size:9.4px;color:#cc44ff;font-weight:normal;">52.3798</div>
<div class="t n" style="right:44.00px;text-align:right;top:718.54px;font-size:9.4px;color:#cc44ff;font-weight:normal;">50.0000</div>
<div class="t n" style="right:126.00px;text-align:right;top:728.29px;font-size:9.4px;color:#ff0000;font-weight:normal;">53.1942</div>
<div class="t n" style="right:44.00px;text-align:right;top:728.29px;font-size:9.4px;color:#ff0000;font-weight:normal;">50.0000</div>
<div class="t n" style="right:126.00px;text-align:right;top:738.04px;font-size:9.4px;color:#60a0a8;font-weight:normal;">53.1921</div>
<div class="t n" style="right:44.00px;text-align:right;top:738.04px;font-size:9.4px;color:#60a0a8;font-weight:normal;">50.0000</div>
<div class="t n" style="right:126.00px;text-align:right;top:747.79px;font-size:9.4px;color:#8000ff;font-weight:normal;">53.1921</div>
<div class="t n" style="right:44.00px;text-align:right;top:747.79px;font-size:9.4px;color:#8000ff;font-weight:normal;">50.0000</div>
<svg class="b" style="left:944px;top:752px" width="14" height="14" viewBox="0 0 14 14"><path d="M13 1.5 L1.5 13 M13 5.5 L5.5 13 M13 9.5 L9.5 13" stroke="#fff" stroke-width="1.2"/><path d="M13 3 L3 13 M13 7 L7 13 M13 11 L11 13" stroke="#8c8ca8" stroke-width="1.2"/></svg>
</body></html>
